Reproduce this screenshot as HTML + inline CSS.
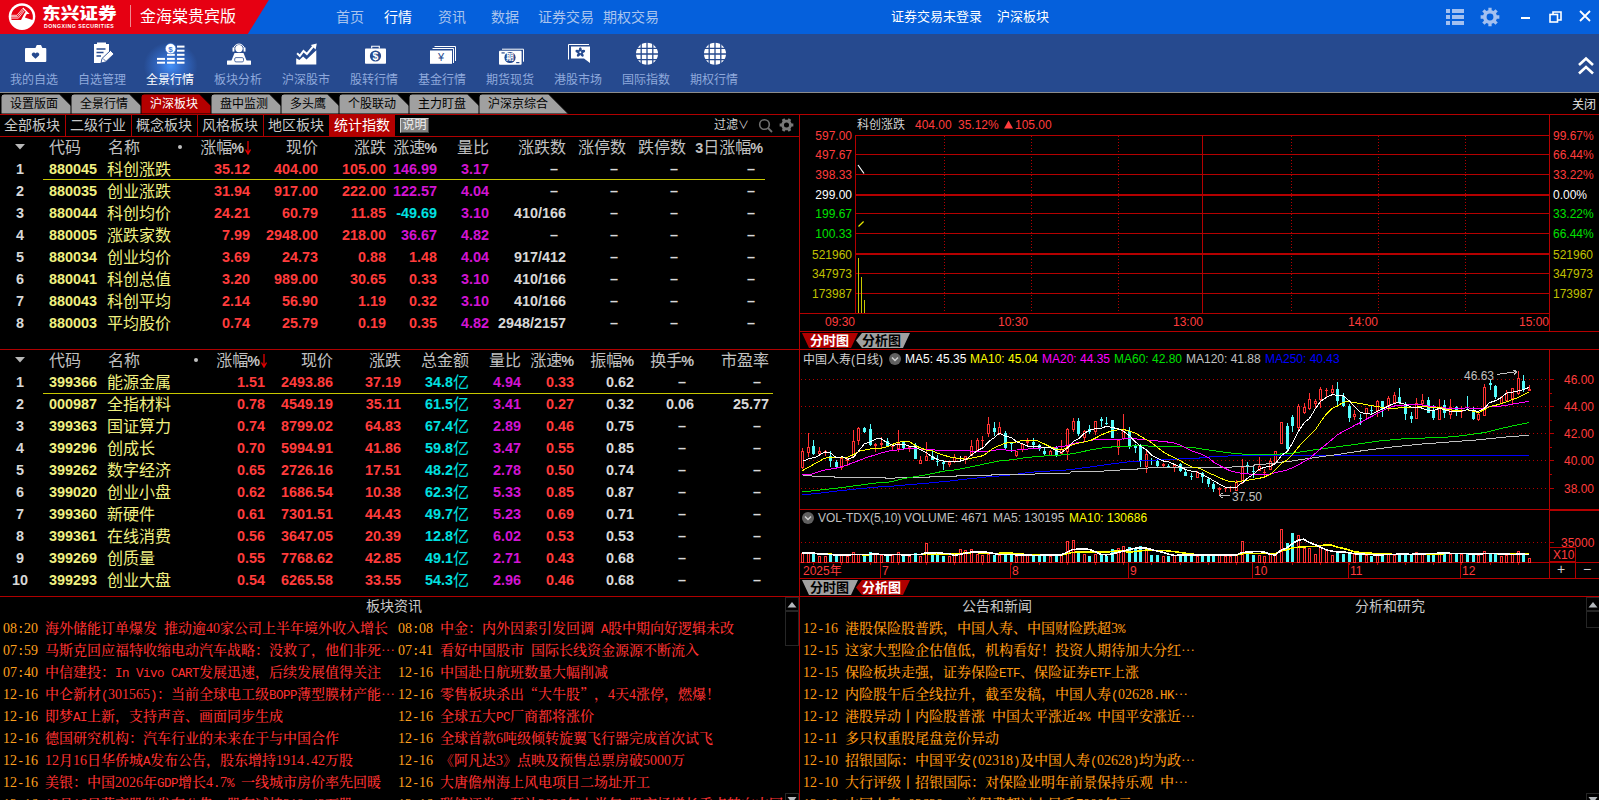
<!DOCTYPE html>
<html lang="zh-CN"><head><meta charset="utf-8"><title>东兴证券 金海棠贵宾版</title>
<style>
*{margin:0;padding:0;box-sizing:border-box}
html,body{width:1599px;height:800px;overflow:hidden;background:#000}
body{position:relative;font-family:"Liberation Sans","Noto Sans CJK SC",sans-serif;color:#c0c0c0}
.a{position:absolute;white-space:nowrap}
.ln{position:absolute;background:#b00000}
#title{left:0;top:0;width:1599px;height:34px;background:#0560dc}
#tool{left:0;top:34px;width:1599px;height:58px;background:#264a8f}
#toolline{left:0;top:92px;width:1599px;height:1px;background:#8c8c8c}
.nav{top:7px;font-size:14px;color:#a9c4ee;line-height:20px}
.tb{top:70px;font-size:14px;color:#8fa9dc;width:68px;text-align:center;line-height:18px}
.tab{top:96px;height:17px;line-height:17px;font-size:12px;color:#000;text-align:center}
.st{top:115px;height:21px;line-height:21px;font-size:16px;color:#c0c0c0;font-weight:400}
.th{font-size:16px;line-height:22px;height:22px;color:#c0c0c0;font-weight:400}
.td{font-size:14.4px;line-height:22px;height:22px;font-weight:bold;text-align:right}
.nm{font-size:16px;line-height:22px;height:22px;color:#f0f080;font-weight:400;font-family:"Liberation Sans","Noto Sans CJK SC",sans-serif}
.r{color:#ff3c3c}.m{color:#d214d2}.c{color:#00e0e0}.w{color:#d8d8d8}.y{color:#f0f080}
.nw{font-family:"Liberation Serif","Noto Serif CJK SC",serif;font-weight:500;font-size:14px;line-height:22px;height:22px}
.el{font-family:"Noto Serif CJK SC",serif;font-feature-settings:"fwid";line-height:0}
.lt{font-family:"Liberation Mono",monospace;font-size:12.5px;letter-spacing:-0.5px;line-height:0}
.ax{font-size:12px;line-height:14px;font-family:"Liberation Sans",sans-serif}
</style></head>
<body>

<!-- header -->
<div class="a" id="title"></div>
<svg class="a" style="left:0;top:0" width="280" height="34" viewBox="0 0 280 34"><polygon points="0,0 268.800,0 247.800,34 0,34" fill="#e60012"/><circle cx="22" cy="16.600" r="13.300" fill="#fff"/><path d="M11.600 20 A10.900 10.900 0 1 1 32.400 20 Z" fill="#e60012"/><path d="M10.600 15.300 H17 L22.600 8.700 M10.700 16.700 H17.700 L23.400 9.800 M11 18.100 H18.400 L24.200 10.900" stroke="#fff" stroke-width="0.800" fill="none"/><polygon points="23.200,7.500 29.600,14 26.800,14 24.800,17.600 32.400,20 21,20 24.400,13.600 25.700,11.800 22.400,8.500" fill="#fff"/><rect x="130" y="5" width="1" height="22" fill="#f08a90"/></svg>
<div class="a" style="left:42px;top:2.5px;font-size:16px;line-height:22px;font-weight:900;color:#fff;transform:scaleX(1.165);transform-origin:0 0;font-family:'Liberation Sans','Noto Sans CJK SC',sans-serif">东兴证券</div>
<div class="a" style="left:44px;top:22px;font-size:5.2px;line-height:8px;font-weight:bold;color:#fff;letter-spacing:0.5px">DONGXING SECURITIES</div>
<div class="a" style="left:140px;top:6px;font-size:16px;line-height:22px;color:#fff">金海棠贵宾版</div>
<div class="a nav" style="left:336px;color:#a9c4ee">首页</div>
<div class="a nav" style="left:384px;color:#fff">行情</div>
<div class="a nav" style="left:438px;color:#a9c4ee">资讯</div>
<div class="a nav" style="left:491px;color:#a9c4ee">数据</div>
<div class="a nav" style="left:538px;color:#a9c4ee">证券交易</div>
<div class="a nav" style="left:603px;color:#a9c4ee">期权交易</div>
<div class="a" style="left:891px;top:8px;font-size:13px;line-height:18px;color:#fff">证券交易未登录</div>
<div class="a" style="left:997px;top:8px;font-size:13px;line-height:18px;color:#fff">沪深板块</div>
<svg class="a" style="left:1440px;top:0" width="159" height="34" viewBox="1440 0 159 34"><g fill="#a3c0f0"><rect x="1446" y="9" width="4" height="4"/><rect x="1452" y="9" width="12" height="4"/><rect x="1446" y="15" width="4" height="4"/><rect x="1452" y="15" width="12" height="4"/><rect x="1446" y="21" width="4" height="4"/><rect x="1452" y="21" width="12" height="4"/></g><path d="M1499.36 15.37 L1499.36 18.63 L1496.81 18.63 L1495.97 20.66 L1497.77 22.46 L1495.46 24.77 L1493.66 22.97 L1491.63 23.81 L1491.63 26.36 L1488.37 26.36 L1488.37 23.81 L1486.34 22.97 L1484.54 24.77 L1482.23 22.46 L1484.03 20.66 L1483.19 18.63 L1480.64 18.63 L1480.64 15.37 L1483.19 15.37 L1484.03 13.34 L1482.23 11.54 L1484.54 9.23 L1486.34 11.03 L1488.37 10.19 L1488.37 7.64 L1491.63 7.64 L1491.63 10.19 L1493.66 11.03 L1495.46 9.23 L1497.77 11.54 L1495.97 13.34 L1496.81 15.37 Z M1486.58 17.00 a3.42 3.42 0 1 0 6.84 0 a3.42 3.42 0 1 0 -6.84 0 Z" fill="#a3c0f0" fill-rule="evenodd"/><rect x="1521" y="17" width="9" height="2" fill="#fff"/><g fill="none" stroke="#fff" stroke-width="1.6"><path d="M1553 14 V12 H1561 V20 H1558"/><rect x="1550" y="14.5" width="7.5" height="7.5"/></g><path d="M1580 11 L1590 21 M1590 11 L1580 21" stroke="#fff" stroke-width="1.8" fill="none"/></svg>
<div class="a" id="tool"></div>
<div class="a" style="left:132px;top:34px;width:76px;height:58px;background:radial-gradient(ellipse 27px 24px at 51% 55%,rgba(70,150,255,.95) 0%,rgba(60,130,240,.6) 40%,rgba(38,74,143,0) 100%)"></div>
<div class="a" style="left:0px;top:71px;width:68px;text-align:center;font-size:12px;line-height:18px;color:#8fa9dc">我的自选</div>
<div class="a" style="left:68px;top:71px;width:68px;text-align:center;font-size:12px;line-height:18px;color:#8fa9dc">自选管理</div>
<div class="a" style="left:136px;top:71px;width:68px;text-align:center;font-size:12px;line-height:18px;color:#fff">全景行情</div>
<div class="a" style="left:204px;top:71px;width:68px;text-align:center;font-size:12px;line-height:18px;color:#8fa9dc">板块分析</div>
<div class="a" style="left:272px;top:71px;width:68px;text-align:center;font-size:12px;line-height:18px;color:#8fa9dc">沪深股市</div>
<div class="a" style="left:340px;top:71px;width:68px;text-align:center;font-size:12px;line-height:18px;color:#8fa9dc">股转行情</div>
<div class="a" style="left:408px;top:71px;width:68px;text-align:center;font-size:12px;line-height:18px;color:#8fa9dc">基金行情</div>
<div class="a" style="left:476px;top:71px;width:68px;text-align:center;font-size:12px;line-height:18px;color:#8fa9dc">期货现货</div>
<div class="a" style="left:544px;top:71px;width:68px;text-align:center;font-size:12px;line-height:18px;color:#8fa9dc">港股市场</div>
<div class="a" style="left:612px;top:71px;width:68px;text-align:center;font-size:12px;line-height:18px;color:#8fa9dc">国际指数</div>
<div class="a" style="left:680px;top:71px;width:68px;text-align:center;font-size:12px;line-height:18px;color:#8fa9dc">期权行情</div>
<svg class="a" style="left:0;top:34px" width="760" height="58" viewBox="0 34 760 58"><g fill="#fff"><rect x="25" y="48" width="21.300" height="14" rx="1"/><polygon points="35.300,48.200 36.800,45 41,45 42.500,48.200"/></g><path d="M35.500 58.800 l-3.500 -3.300 a2 2 0 0 1 3.500 -2 a2 2 0 0 1 3.500 2 z" fill="#264a8f"/><g><path d="M94 44 h3 v-1.5 h9 v1.5 h3 v8 l-8 11 h-7z" fill="#fff"/><path d="M96.5 49 h9 M96.5 52.5 h7 M96.5 56 h4.5" stroke="#264a8f" stroke-width="1.3"/><path d="M101 63 l1 -4.5 l8.5 -8 l3.5 3.5 l-8.5 8z" fill="#fff" stroke="#264a8f" stroke-width="0.9"/><path d="M103 58.5 l3 3" stroke="#264a8f" stroke-width="0.8"/></g><g fill="#fff"><rect x="177" y="45.6" width="7.5" height="2"/><rect x="177" y="49.7" width="7.5" height="2"/><rect x="177" y="53.8" width="7.5" height="2"/><rect x="177" y="57.9" width="7.5" height="2"/><rect x="177" y="61.7" width="7.5" height="2"/><rect x="167" y="53.8" width="7.8" height="2"/><rect x="167" y="57.9" width="7.8" height="2"/><rect x="167" y="61.7" width="7.8" height="2"/><rect x="157" y="57.9" width="8" height="2"/><rect x="157" y="61.7" width="8" height="2"/><circle cx="170.600" cy="48.600" r="5.200" stroke="#3a78d8" stroke-width="0.600"/></g><text x="170.600" y="51.500" font-size="8" font-weight="bold" text-anchor="middle" fill="#3a78d8" font-family="Liberation Sans,sans-serif">$</text><g fill="#fff"><circle cx="239" cy="48.600" r="3.700"/><rect x="232.500" y="47.600" width="1.900" height="4"/><rect x="243.600" y="47.600" width="1.900" height="4"/><path d="M234.500 53 h9 l3.200 8 h-15.400 z"/><rect x="227" y="60.500" width="24" height="4.300" rx="0.500"/></g><path d="M233.500 49.500 a5.500 5.500 0 0 1 11 0" stroke="#fff" stroke-width="1" fill="none"/><rect x="234.700" y="57.600" width="8.800" height="4.300" rx="1.300" fill="none" stroke="#264a8f" stroke-width="0.800"/><polygon points="296.200,58.300 299.400,60.100 303.100,56.600 306.500,59.600 316.300,50.300 316.300,64.500 296.200,64.500" fill="#fff"/><path d="M297.100 53.300 L299.800 55.900 L303.500 50.900 L306.900 54 L313.600 45.800" stroke="#fff" stroke-width="2" fill="none"/><polygon points="316.800,43.600 310.800,45 315.600,49.600" fill="#fff"/><g><path d="M371.700 48.500 v-2.300 h7.600 v2.300" stroke="#fff" stroke-width="1.100" fill="none"/><rect x="365" y="48.500" width="21" height="15.300" rx="0.800" fill="#fff"/><circle cx="375.500" cy="56" r="5.600" fill="#264a8f"/></g><text x="375.500" y="59.800" font-size="10.500" font-weight="bold" text-anchor="middle" fill="#fff" font-family="Liberation Sans,sans-serif">$</text><g fill="none" stroke="#fff" stroke-width="1"><path d="M434.500 46.500 h21 v14.500"/><path d="M432.500 48.500 h21 v14.500"/></g><rect x="430" y="50.500" width="22" height="13.300" fill="#fff"/><text x="441" y="61.300" font-size="11" text-anchor="middle" fill="#264a8f" font-family="Liberation Sans,sans-serif">¥</text><path d="M502 49.200 h21.500 v12.500" stroke="#fff" stroke-width="1" fill="none"/><rect x="499" y="50.800" width="22.600" height="14" rx="1" fill="#fff"/><circle cx="510" cy="57.500" r="5.600" fill="#264a8f"/><rect x="501.500" y="52.300" width="3.200" height="1.200" fill="#264a8f"/><rect x="516.200" y="62" width="3.200" height="1.200" fill="#264a8f"/><text x="510" y="60.400" font-size="7.800" font-weight="bold" text-anchor="middle" fill="#fff" font-family="Liberation Sans,Noto Sans CJK SC,sans-serif">期</text><path d="M568.500 59.500 V44.500 H589" stroke="#fff" stroke-width="1" fill="none"/><path d="M571 46.500 h19 v16.500 l-6 -4.500 h-13 z" fill="#fff"/><g fill="#264a8f" transform="translate(580.300 52.300)"><ellipse cx="0" cy="-2.500" rx="1.500" ry="2.600" transform="rotate(0)"/><ellipse cx="0" cy="-2.500" rx="1.500" ry="2.600" transform="rotate(72)"/><ellipse cx="0" cy="-2.500" rx="1.500" ry="2.600" transform="rotate(144)"/><ellipse cx="0" cy="-2.500" rx="1.500" ry="2.600" transform="rotate(216)"/><ellipse cx="0" cy="-2.500" rx="1.500" ry="2.600" transform="rotate(288)"/></g><circle cx="580.300" cy="52.300" r="1" fill="#fff"/><circle cx="647.0" cy="53.800" r="11" fill="#fff"/><g stroke="#264a8f" stroke-width="1.300" fill="none"><path d="M641.2 42 v24 M647.0 42 v24 M652.8 42 v24"/><path d="M635.0 48.300 h24 M635.0 54 h24 M635.0 59.700 h24"/></g><circle cx="715.0" cy="53.800" r="11" fill="#fff"/><g stroke="#264a8f" stroke-width="1.300" fill="none"><path d="M709.2 42 v24 M715.0 42 v24 M720.8 42 v24"/><path d="M703.0 48.300 h24 M703.0 54 h24 M703.0 59.700 h24"/></g></svg>
<svg class="a" style="left:1574px;top:54px" width="24" height="24" viewBox="0 0 24 24"><path d="M5 11 L12 4.5 L19 11 M5 19.5 L12 13 L19 19.5" stroke="#fff" stroke-width="2.6" fill="none"/></svg>
<div class="a" id="toolline"></div>
<!-- tabs -->
<svg class="a" style="left:0;top:93px" width="600" height="22" viewBox="0 93 600 22"><path d="M1 114 V97 Q1 94 4 94 H59.5 L79.5 114 Z" fill="#a0a0a0" stroke="#000" stroke-width="1"/><path d="M71 114 V97 Q71 94 74 94 H129.5 L149.5 114 Z" fill="#a0a0a0" stroke="#000" stroke-width="1"/><path d="M141 114 V97 Q141 94 144 94 H199.5 L219.5 114 Z" fill="#b40000" stroke="#000" stroke-width="1"/><path d="M211 114 V97 Q211 94 214 94 H269.5 L289.5 114 Z" fill="#a0a0a0" stroke="#000" stroke-width="1"/><path d="M281 114 V97 Q281 94 284 94 H327.5 L347.5 114 Z" fill="#a0a0a0" stroke="#000" stroke-width="1"/><path d="M339 114 V97 Q339 94 342 94 H397.5 L417.5 114 Z" fill="#a0a0a0" stroke="#000" stroke-width="1"/><path d="M409 114 V97 Q409 94 412 94 H467.5 L487.5 114 Z" fill="#a0a0a0" stroke="#000" stroke-width="1"/><path d="M479 114 V97 Q479 94 482 94 H548.5 L568.5 114 Z" fill="#a0a0a0" stroke="#000" stroke-width="1"/></svg>
<div class="a tab" style="left:10px;color:#000">设置版面</div>
<div class="a tab" style="left:80px;color:#000">全景行情</div>
<div class="a tab" style="left:150px;color:#fff">沪深板块</div>
<div class="a tab" style="left:220px;color:#000">盘中监测</div>
<div class="a tab" style="left:290px;color:#000">多头鹰</div>
<div class="a tab" style="left:348px;color:#000">个股联动</div>
<div class="a tab" style="left:418px;color:#000">主力盯盘</div>
<div class="a tab" style="left:488px;color:#000">沪深京综合</div>
<div class="a" style="left:1572px;top:97px;font-size:12px;line-height:17px;color:#e0e0e0">关闭</div>
<div class="ln" style="left:0;top:114px;width:799px;height:1px"></div>
<div class="ln" style="left:0;top:136px;width:799px;height:1px"></div>
<div class="a st" style="left:-1px;width:66px;text-align:center;font-size:14px;color:#c8c8c8">全部板块</div>
<div class="ln" style="left:65px;top:115px;width:1px;height:21px"></div>
<div class="a st" style="left:65px;width:66px;text-align:center;font-size:14px;color:#c8c8c8">二级行业</div>
<div class="ln" style="left:131px;top:115px;width:1px;height:21px"></div>
<div class="a st" style="left:131px;width:66px;text-align:center;font-size:14px;color:#c8c8c8">概念板块</div>
<div class="ln" style="left:197px;top:115px;width:1px;height:21px"></div>
<div class="a st" style="left:197px;width:66px;text-align:center;font-size:14px;color:#c8c8c8">风格板块</div>
<div class="ln" style="left:263px;top:115px;width:1px;height:21px"></div>
<div class="a st" style="left:263px;width:66px;text-align:center;font-size:14px;color:#c8c8c8">地区板块</div>
<div class="ln" style="left:329px;top:115px;width:1px;height:21px"></div>
<div class="a" style="left:329px;top:115px;width:66px;height:21px;background:#b40000"></div>
<div class="a st" style="left:329px;width:66px;text-align:center;font-size:14px;color:#fff">统计指数</div>
<div class="a" style="left:400px;top:118px;width:29px;height:15px;background:#808080;border:1px solid #d0d0d0;border-right-color:#404040;border-bottom-color:#404040;font-size:12px;line-height:13px;text-align:center;color:#f0f0f0">说明</div>
<div class="a" style="left:714px;top:116px;font-size:12px;line-height:19px;color:#d0d0d0">过滤<span style="font-size:11px">∨</span></div>
<svg class="a" style="left:755px;top:115px" width="42" height="21" viewBox="755 115 42 21"><circle cx="764.5" cy="124.500" r="4.800" stroke="#707070" stroke-width="1.600" fill="none"/><path d="M768 128 l4 4" stroke="#707070" stroke-width="1.800"/><path d="M793.35 123.54 L793.35 126.46 L791.67 126.56 L790.44 128.70 L791.18 130.20 L788.66 131.66 L787.73 130.26 L785.27 130.26 L784.34 131.66 L781.82 130.20 L782.56 128.70 L781.33 126.56 L779.65 126.46 L779.65 123.54 L781.33 123.44 L782.56 121.30 L781.82 119.80 L784.34 118.34 L785.27 119.74 L787.73 119.74 L788.66 118.34 L791.18 119.80 L790.44 121.30 L791.67 123.44 Z M783.98 125.00 a2.52 2.52 0 1 0 5.04 0 a2.52 2.52 0 1 0 -5.04 0 Z" fill="#787878" fill-rule="evenodd"/></svg>
<!-- tables -->
<svg class="a" style="left:15px;top:144px" width="10" height="6" viewBox="0 0 10 6"><path d="M0 0 H10 L5 5.5 Z" fill="#b8b8b8"/></svg>
<div class="a th" style="left:49px;top:137px">代码</div>
<div class="a th" style="left:108px;top:137px">名称</div>
<div class="a" style="left:178px;top:145px;width:4px;height:4px;border-radius:2px;background:#c0c0c0"></div>
<div class="a th" style="right:1355px;top:137px">涨幅<b style="margin-left:-1px;font-size:14.4px;font-family:'Liberation Sans',sans-serif">%</b></div>
<div class="a th" style="right:1281px;top:137px">现价</div>
<div class="a th" style="right:1213px;top:137px">涨跌</div>
<div class="a th" style="right:1162px;top:137px">涨速<b style="margin-left:-1px;font-size:14.4px;font-family:'Liberation Sans',sans-serif">%</b></div>
<div class="a th" style="right:1110px;top:137px">量比</div>
<div class="a th" style="right:1033px;top:137px">涨跌数</div>
<div class="a th" style="right:973px;top:137px">涨停数</div>
<div class="a th" style="right:913px;top:137px">跌停数</div>
<div class="a th" style="right:836px;top:137px"><b style="font-size:14.4px;font-family:'Liberation Sans',sans-serif">3</b>日涨幅<b style="margin-left:-1px;font-size:14.4px;font-family:'Liberation Sans',sans-serif">%</b></div>
<svg class="a" style="left:245px;top:141px" width="6" height="14" viewBox="0 0 6 14"><path d="M3 0 V12 M0.500 8.500 L3 13 L5.500 8.500" stroke="#e00000" stroke-width="1.300" fill="none"/></svg>
<div class="a td w" style="left:10px;width:20px;text-align:center;top:158px">1</div>
<div class="a td y" style="left:49px;top:158px">880045</div>
<div class="a nm" style="left:107px;top:159px">科创涨跌</div>
<div class="a td r" style="right:1349px;top:158px">35.12</div>
<div class="a td r" style="right:1281px;top:158px">404.00</div>
<div class="a td r" style="right:1213px;top:158px">105.00</div>
<div class="a td m" style="right:1162px;top:158px">146.99</div>
<div class="a td m" style="right:1110px;top:158px">3.17</div>
<div class="a td w" style="right:1041px;top:158px">–</div>
<div class="a td w" style="right:981px;top:158px">–</div>
<div class="a td w" style="right:921px;top:158px">–</div>
<div class="a td w" style="right:844px;top:158px">–</div>
<div class="a td w" style="left:10px;width:20px;text-align:center;top:180px">2</div>
<div class="a td y" style="left:49px;top:180px">880035</div>
<div class="a nm" style="left:107px;top:181px">创业涨跌</div>
<div class="a td r" style="right:1349px;top:180px">31.94</div>
<div class="a td r" style="right:1281px;top:180px">917.00</div>
<div class="a td r" style="right:1213px;top:180px">222.00</div>
<div class="a td m" style="right:1162px;top:180px">122.57</div>
<div class="a td m" style="right:1110px;top:180px">4.04</div>
<div class="a td w" style="right:1041px;top:180px">–</div>
<div class="a td w" style="right:981px;top:180px">–</div>
<div class="a td w" style="right:921px;top:180px">–</div>
<div class="a td w" style="right:844px;top:180px">–</div>
<div class="a td w" style="left:10px;width:20px;text-align:center;top:202px">3</div>
<div class="a td y" style="left:49px;top:202px">880044</div>
<div class="a nm" style="left:107px;top:203px">科创均价</div>
<div class="a td r" style="right:1349px;top:202px">24.21</div>
<div class="a td r" style="right:1281px;top:202px">60.79</div>
<div class="a td r" style="right:1213px;top:202px">11.85</div>
<div class="a td c" style="right:1162px;top:202px">-49.69</div>
<div class="a td m" style="right:1110px;top:202px">3.10</div>
<div class="a td w" style="right:1033px;top:202px">410/166</div>
<div class="a td w" style="right:981px;top:202px">–</div>
<div class="a td w" style="right:921px;top:202px">–</div>
<div class="a td w" style="right:844px;top:202px">–</div>
<div class="a td w" style="left:10px;width:20px;text-align:center;top:224px">4</div>
<div class="a td y" style="left:49px;top:224px">880005</div>
<div class="a nm" style="left:107px;top:225px">涨跌家数</div>
<div class="a td r" style="right:1349px;top:224px">7.99</div>
<div class="a td r" style="right:1281px;top:224px">2948.00</div>
<div class="a td r" style="right:1213px;top:224px">218.00</div>
<div class="a td m" style="right:1162px;top:224px">36.67</div>
<div class="a td m" style="right:1110px;top:224px">4.82</div>
<div class="a td w" style="right:1041px;top:224px">–</div>
<div class="a td w" style="right:981px;top:224px">–</div>
<div class="a td w" style="right:921px;top:224px">–</div>
<div class="a td w" style="right:844px;top:224px">–</div>
<div class="a td w" style="left:10px;width:20px;text-align:center;top:246px">5</div>
<div class="a td y" style="left:49px;top:246px">880034</div>
<div class="a nm" style="left:107px;top:247px">创业均价</div>
<div class="a td r" style="right:1349px;top:246px">3.69</div>
<div class="a td r" style="right:1281px;top:246px">24.73</div>
<div class="a td r" style="right:1213px;top:246px">0.88</div>
<div class="a td r" style="right:1162px;top:246px">1.48</div>
<div class="a td m" style="right:1110px;top:246px">4.04</div>
<div class="a td w" style="right:1033px;top:246px">917/412</div>
<div class="a td w" style="right:981px;top:246px">–</div>
<div class="a td w" style="right:921px;top:246px">–</div>
<div class="a td w" style="right:844px;top:246px">–</div>
<div class="a td w" style="left:10px;width:20px;text-align:center;top:268px">6</div>
<div class="a td y" style="left:49px;top:268px">880041</div>
<div class="a nm" style="left:107px;top:269px">科创总值</div>
<div class="a td r" style="right:1349px;top:268px">3.20</div>
<div class="a td r" style="right:1281px;top:268px">989.00</div>
<div class="a td r" style="right:1213px;top:268px">30.65</div>
<div class="a td r" style="right:1162px;top:268px">0.33</div>
<div class="a td m" style="right:1110px;top:268px">3.10</div>
<div class="a td w" style="right:1033px;top:268px">410/166</div>
<div class="a td w" style="right:981px;top:268px">–</div>
<div class="a td w" style="right:921px;top:268px">–</div>
<div class="a td w" style="right:844px;top:268px">–</div>
<div class="a td w" style="left:10px;width:20px;text-align:center;top:290px">7</div>
<div class="a td y" style="left:49px;top:290px">880043</div>
<div class="a nm" style="left:107px;top:291px">科创平均</div>
<div class="a td r" style="right:1349px;top:290px">2.14</div>
<div class="a td r" style="right:1281px;top:290px">56.90</div>
<div class="a td r" style="right:1213px;top:290px">1.19</div>
<div class="a td r" style="right:1162px;top:290px">0.32</div>
<div class="a td m" style="right:1110px;top:290px">3.10</div>
<div class="a td w" style="right:1033px;top:290px">410/166</div>
<div class="a td w" style="right:981px;top:290px">–</div>
<div class="a td w" style="right:921px;top:290px">–</div>
<div class="a td w" style="right:844px;top:290px">–</div>
<div class="a td w" style="left:10px;width:20px;text-align:center;top:312px">8</div>
<div class="a td y" style="left:49px;top:312px">880003</div>
<div class="a nm" style="left:107px;top:313px">平均股价</div>
<div class="a td r" style="right:1349px;top:312px">0.74</div>
<div class="a td r" style="right:1281px;top:312px">25.79</div>
<div class="a td r" style="right:1213px;top:312px">0.19</div>
<div class="a td r" style="right:1162px;top:312px">0.35</div>
<div class="a td m" style="right:1110px;top:312px">4.82</div>
<div class="a td w" style="right:1033px;top:312px">2948/2157</div>
<div class="a td w" style="right:981px;top:312px">–</div>
<div class="a td w" style="right:921px;top:312px">–</div>
<div class="a td w" style="right:844px;top:312px">–</div>
<div class="a" style="left:43px;top:179px;width:722px;height:1px;background:#c8c800"></div>
<div class="ln" style="left:0;top:349px;width:799px;height:1px"></div>
<svg class="a" style="left:15px;top:357px" width="10" height="6" viewBox="0 0 10 6"><path d="M0 0 H10 L5 5.5 Z" fill="#b8b8b8"/></svg>
<div class="a th" style="left:49px;top:350px">代码</div>
<div class="a th" style="left:108px;top:350px">名称</div>
<div class="a" style="left:194px;top:358px;width:4px;height:4px;border-radius:2px;background:#c0c0c0"></div>
<div class="a th" style="right:1339px;top:350px">涨幅<b style="margin-left:-1px;font-size:14.4px;font-family:'Liberation Sans',sans-serif">%</b></div>
<div class="a th" style="right:1266px;top:350px">现价</div>
<div class="a th" style="right:1198px;top:350px">涨跌</div>
<div class="a th" style="right:1130px;top:350px">总金额</div>
<div class="a th" style="right:1078px;top:350px">量比</div>
<div class="a th" style="right:1025px;top:350px">涨速<b style="margin-left:-1px;font-size:14.4px;font-family:'Liberation Sans',sans-serif">%</b></div>
<div class="a th" style="right:965px;top:350px">振幅<b style="margin-left:-1px;font-size:14.4px;font-family:'Liberation Sans',sans-serif">%</b></div>
<div class="a th" style="right:905px;top:350px">换手<b style="margin-left:-1px;font-size:14.4px;font-family:'Liberation Sans',sans-serif">%</b></div>
<div class="a th" style="right:830px;top:350px">市盈率</div>
<svg class="a" style="left:261px;top:354px" width="6" height="14" viewBox="0 0 6 14"><path d="M3 0 V12 M0.500 8.500 L3 13 L5.500 8.500" stroke="#e00000" stroke-width="1.300" fill="none"/></svg>
<div class="a td w" style="left:10px;width:20px;text-align:center;top:371px">1</div>
<div class="a td y" style="left:49px;top:371px">399366</div>
<div class="a nm" style="left:107px;top:372px">能源金属</div>
<div class="a td r" style="right:1334px;top:371px">1.51</div>
<div class="a td r" style="right:1266px;top:371px">2493.86</div>
<div class="a td r" style="right:1198px;top:371px">37.19</div>
<div class="a td c" style="right:1146px;top:371px">34.8</div>
<div class="a nm" style="left:453px;top:372px;color:#00e0e0">亿</div>
<div class="a td m" style="right:1078px;top:371px">4.94</div>
<div class="a td r" style="right:1025px;top:371px">0.33</div>
<div class="a td w" style="right:965px;top:371px">0.62</div>
<div class="a td w" style="right:913px;top:371px">–</div>
<div class="a td w" style="right:838px;top:371px">–</div>
<div class="a td w" style="left:10px;width:20px;text-align:center;top:393px">2</div>
<div class="a td y" style="left:49px;top:393px">000987</div>
<div class="a nm" style="left:107px;top:394px">全指材料</div>
<div class="a td r" style="right:1334px;top:393px">0.78</div>
<div class="a td r" style="right:1266px;top:393px">4549.19</div>
<div class="a td r" style="right:1198px;top:393px">35.11</div>
<div class="a td c" style="right:1146px;top:393px">61.5</div>
<div class="a nm" style="left:453px;top:394px;color:#00e0e0">亿</div>
<div class="a td m" style="right:1078px;top:393px">3.41</div>
<div class="a td r" style="right:1025px;top:393px">0.27</div>
<div class="a td w" style="right:965px;top:393px">0.32</div>
<div class="a td w" style="right:905px;top:393px">0.06</div>
<div class="a td w" style="right:830px;top:393px">25.77</div>
<div class="a td w" style="left:10px;width:20px;text-align:center;top:415px">3</div>
<div class="a td y" style="left:49px;top:415px">399363</div>
<div class="a nm" style="left:107px;top:416px">国证算力</div>
<div class="a td r" style="right:1334px;top:415px">0.74</div>
<div class="a td r" style="right:1266px;top:415px">8799.02</div>
<div class="a td r" style="right:1198px;top:415px">64.83</div>
<div class="a td c" style="right:1146px;top:415px">67.4</div>
<div class="a nm" style="left:453px;top:416px;color:#00e0e0">亿</div>
<div class="a td m" style="right:1078px;top:415px">2.89</div>
<div class="a td r" style="right:1025px;top:415px">0.46</div>
<div class="a td w" style="right:965px;top:415px">0.75</div>
<div class="a td w" style="right:913px;top:415px">–</div>
<div class="a td w" style="right:838px;top:415px">–</div>
<div class="a td w" style="left:10px;width:20px;text-align:center;top:437px">4</div>
<div class="a td y" style="left:49px;top:437px">399296</div>
<div class="a nm" style="left:107px;top:438px">创成长</div>
<div class="a td r" style="right:1334px;top:437px">0.70</div>
<div class="a td r" style="right:1266px;top:437px">5994.91</div>
<div class="a td r" style="right:1198px;top:437px">41.86</div>
<div class="a td c" style="right:1146px;top:437px">59.8</div>
<div class="a nm" style="left:453px;top:438px;color:#00e0e0">亿</div>
<div class="a td m" style="right:1078px;top:437px">3.47</div>
<div class="a td r" style="right:1025px;top:437px">0.55</div>
<div class="a td w" style="right:965px;top:437px">0.85</div>
<div class="a td w" style="right:913px;top:437px">–</div>
<div class="a td w" style="right:838px;top:437px">–</div>
<div class="a td w" style="left:10px;width:20px;text-align:center;top:459px">5</div>
<div class="a td y" style="left:49px;top:459px">399262</div>
<div class="a nm" style="left:107px;top:460px">数字经济</div>
<div class="a td r" style="right:1334px;top:459px">0.65</div>
<div class="a td r" style="right:1266px;top:459px">2726.16</div>
<div class="a td r" style="right:1198px;top:459px">17.51</div>
<div class="a td c" style="right:1146px;top:459px">48.2</div>
<div class="a nm" style="left:453px;top:460px;color:#00e0e0">亿</div>
<div class="a td m" style="right:1078px;top:459px">2.78</div>
<div class="a td r" style="right:1025px;top:459px">0.50</div>
<div class="a td w" style="right:965px;top:459px">0.74</div>
<div class="a td w" style="right:913px;top:459px">–</div>
<div class="a td w" style="right:838px;top:459px">–</div>
<div class="a td w" style="left:10px;width:20px;text-align:center;top:481px">6</div>
<div class="a td y" style="left:49px;top:481px">399020</div>
<div class="a nm" style="left:107px;top:482px">创业小盘</div>
<div class="a td r" style="right:1334px;top:481px">0.62</div>
<div class="a td r" style="right:1266px;top:481px">1686.54</div>
<div class="a td r" style="right:1198px;top:481px">10.38</div>
<div class="a td c" style="right:1146px;top:481px">62.3</div>
<div class="a nm" style="left:453px;top:482px;color:#00e0e0">亿</div>
<div class="a td m" style="right:1078px;top:481px">5.33</div>
<div class="a td r" style="right:1025px;top:481px">0.85</div>
<div class="a td w" style="right:965px;top:481px">0.87</div>
<div class="a td w" style="right:913px;top:481px">–</div>
<div class="a td w" style="right:838px;top:481px">–</div>
<div class="a td w" style="left:10px;width:20px;text-align:center;top:503px">7</div>
<div class="a td y" style="left:49px;top:503px">399360</div>
<div class="a nm" style="left:107px;top:504px">新硬件</div>
<div class="a td r" style="right:1334px;top:503px">0.61</div>
<div class="a td r" style="right:1266px;top:503px">7301.51</div>
<div class="a td r" style="right:1198px;top:503px">44.43</div>
<div class="a td c" style="right:1146px;top:503px">49.7</div>
<div class="a nm" style="left:453px;top:504px;color:#00e0e0">亿</div>
<div class="a td m" style="right:1078px;top:503px">5.23</div>
<div class="a td r" style="right:1025px;top:503px">0.69</div>
<div class="a td w" style="right:965px;top:503px">0.71</div>
<div class="a td w" style="right:913px;top:503px">–</div>
<div class="a td w" style="right:838px;top:503px">–</div>
<div class="a td w" style="left:10px;width:20px;text-align:center;top:525px">8</div>
<div class="a td y" style="left:49px;top:525px">399361</div>
<div class="a nm" style="left:107px;top:526px">在线消费</div>
<div class="a td r" style="right:1334px;top:525px">0.56</div>
<div class="a td r" style="right:1266px;top:525px">3647.05</div>
<div class="a td r" style="right:1198px;top:525px">20.39</div>
<div class="a td c" style="right:1146px;top:525px">12.8</div>
<div class="a nm" style="left:453px;top:526px;color:#00e0e0">亿</div>
<div class="a td m" style="right:1078px;top:525px">6.02</div>
<div class="a td r" style="right:1025px;top:525px">0.53</div>
<div class="a td w" style="right:965px;top:525px">0.53</div>
<div class="a td w" style="right:913px;top:525px">–</div>
<div class="a td w" style="right:838px;top:525px">–</div>
<div class="a td w" style="left:10px;width:20px;text-align:center;top:547px">9</div>
<div class="a td y" style="left:49px;top:547px">399269</div>
<div class="a nm" style="left:107px;top:548px">创质量</div>
<div class="a td r" style="right:1334px;top:547px">0.55</div>
<div class="a td r" style="right:1266px;top:547px">7768.62</div>
<div class="a td r" style="right:1198px;top:547px">42.85</div>
<div class="a td c" style="right:1146px;top:547px">49.1</div>
<div class="a nm" style="left:453px;top:548px;color:#00e0e0">亿</div>
<div class="a td m" style="right:1078px;top:547px">2.71</div>
<div class="a td r" style="right:1025px;top:547px">0.43</div>
<div class="a td w" style="right:965px;top:547px">0.68</div>
<div class="a td w" style="right:913px;top:547px">–</div>
<div class="a td w" style="right:838px;top:547px">–</div>
<div class="a td w" style="left:10px;width:20px;text-align:center;top:569px">10</div>
<div class="a td y" style="left:49px;top:569px">399293</div>
<div class="a nm" style="left:107px;top:570px">创业大盘</div>
<div class="a td r" style="right:1334px;top:569px">0.54</div>
<div class="a td r" style="right:1266px;top:569px">6265.58</div>
<div class="a td r" style="right:1198px;top:569px">33.55</div>
<div class="a td c" style="right:1146px;top:569px">54.3</div>
<div class="a nm" style="left:453px;top:570px;color:#00e0e0">亿</div>
<div class="a td m" style="right:1078px;top:569px">2.96</div>
<div class="a td r" style="right:1025px;top:569px">0.46</div>
<div class="a td w" style="right:965px;top:569px">0.68</div>
<div class="a td w" style="right:913px;top:569px">–</div>
<div class="a td w" style="right:838px;top:569px">–</div>
<div class="a" style="left:43px;top:393px;width:730px;height:1px;background:#c8c800"></div>
<div class="ln" style="left:0;top:596px;width:799px;height:1px"></div>
<!-- news -->
<div class="a" style="left:366px;top:596px;font-size:14px;line-height:20px;color:#c8c8c8;font-weight:400">板块资讯</div>
<div class="a nw" style="left:3px;top:618px;color:#ffa01e">08<span class="lt">:</span>20</div>
<div class="a nw" style="left:45px;top:618px;color:#ff3232">海外储能订单爆发<span class="lt">&nbsp;</span>推动逾40家公司上半年境外收入增长</div>
<div class="a nw" style="left:3px;top:640px;color:#ffa01e">07<span class="lt">:</span>59</div>
<div class="a nw" style="left:45px;top:640px;color:#ff3232">马斯克回应福特收缩电动汽车战略：没救了，他们非死<span class="el">…</span></div>
<div class="a nw" style="left:3px;top:662px;color:#ffa01e">07<span class="lt">:</span>40</div>
<div class="a nw" style="left:45px;top:662px;color:#ff3232">中信建投：<span class="lt">In&nbsp;Vivo&nbsp;CART</span>发展迅速，后续发展值得关注</div>
<div class="a nw" style="left:3px;top:684px;color:#ffa01e">12<span class="lt">-</span>16</div>
<div class="a nw" style="left:45px;top:684px;color:#ff3232">中仑新材<span class="lt">(</span>301565<span class="lt">)</span>：当前全球电工级<span class="lt">BOPP</span>薄型膜材产能<span class="el">…</span></div>
<div class="a nw" style="left:3px;top:706px;color:#ffa01e">12<span class="lt">-</span>16</div>
<div class="a nw" style="left:45px;top:706px;color:#ff3232">即梦<span class="lt">AI</span>上新，支持声音、画面同步生成</div>
<div class="a nw" style="left:3px;top:728px;color:#ffa01e">12<span class="lt">-</span>16</div>
<div class="a nw" style="left:45px;top:728px;color:#ff3232">德国研究机构：汽车行业的未来在于与中国合作</div>
<div class="a nw" style="left:3px;top:750px;color:#ffa01e">12<span class="lt">-</span>16</div>
<div class="a nw" style="left:45px;top:750px;color:#ff3232">12月16日华侨城<span class="lt">A</span>发布公告，股东增持1914<span class="lt">.</span>42万股</div>
<div class="a nw" style="left:3px;top:772px;color:#ffa01e">12<span class="lt">-</span>16</div>
<div class="a nw" style="left:45px;top:772px;color:#ff3232">美银：中国2026年<span class="lt">GDP</span>增长4<span class="lt">.</span>7<span class="lt">%&nbsp;</span>一线城市房价率先回暖</div>
<div class="a nw" style="left:3px;top:794px;color:#ffa01e">12<span class="lt">-</span>16</div>
<div class="a nw" style="left:45px;top:794px;color:#ff3232">12月16日莫高股份发布公告，股东减持219<span class="lt">.</span>42万股</div>
<div class="a nw" style="left:398px;top:618px;color:#ffa01e">08<span class="lt">:</span>08</div>
<div class="a nw" style="left:440px;top:618px;color:#ff3232">中金：内外因素引发回调<span class="lt">&nbsp;A</span>股中期向好逻辑未改</div>
<div class="a nw" style="left:398px;top:640px;color:#ffa01e">07<span class="lt">:</span>41</div>
<div class="a nw" style="left:440px;top:640px;color:#ff3232">看好中国股市<span class="lt">&nbsp;</span>国际长线资金源源不断流入</div>
<div class="a nw" style="left:398px;top:662px;color:#ffa01e">12<span class="lt">-</span>16</div>
<div class="a nw" style="left:440px;top:662px;color:#ff3232">中国赴日航班数量大幅削减</div>
<div class="a nw" style="left:398px;top:684px;color:#ffa01e">12<span class="lt">-</span>16</div>
<div class="a nw" style="left:440px;top:684px;color:#ff3232">零售板块杀出<span class="el">“</span>大牛股<span class="el">”</span>，4天4涨停，燃爆！</div>
<div class="a nw" style="left:398px;top:706px;color:#ffa01e">12<span class="lt">-</span>16</div>
<div class="a nw" style="left:440px;top:706px;color:#ff3232">全球五大<span class="lt">PC</span>厂商都将涨价</div>
<div class="a nw" style="left:398px;top:728px;color:#ffa01e">12<span class="lt">-</span>16</div>
<div class="a nw" style="left:440px;top:728px;color:#ff3232">全球首款6吨级倾转旋翼飞行器完成首次试飞</div>
<div class="a nw" style="left:398px;top:750px;color:#ffa01e">12<span class="lt">-</span>16</div>
<div class="a nw" style="left:440px;top:750px;color:#ff3232">《阿凡达3》点映及预售总票房破5000万</div>
<div class="a nw" style="left:398px;top:772px;color:#ffa01e">12<span class="lt">-</span>16</div>
<div class="a nw" style="left:440px;top:772px;color:#ff3232">大唐儋州海上风电项目二场址开工</div>
<div class="a nw" style="left:398px;top:794px;color:#ffa01e">12<span class="lt">-</span>16</div>
<div class="a nw" style="left:440px;top:794px;color:#ff3232">联储证券：预计2026年上半年<span class="lt">A</span>股市场增长重点转向中国</div>
<svg class="a" style="left:785px;top:597px" width="14" height="203" viewBox="0 0 14 203"><rect x="0.5" y="0.5" width="13" height="13" fill="#000" stroke="#262626"/><path d="M2.5 10.500 L7.0 5 L11.5 10.500 Z" fill="#b4b8bc"/><rect x="0.5" y="14.500" width="13" height="34" fill="#000" stroke="#262626"/><rect x="0.5" y="196.5" width="13" height="13" fill="#000" stroke="#262626"/><path d="M2.5 200 L7.0 206 L11.5 200 Z" fill="#b4b8bc"/></svg>
<div class="ln" style="left:799px;top:114px;width:1px;height:686px"></div>
<div class="a" style="left:962px;top:596px;font-size:14px;line-height:20px;color:#c8c8c8;font-weight:400">公告和新闻</div>
<div class="a" style="left:1355px;top:596px;font-size:14px;line-height:20px;color:#c8c8c8;font-weight:400">分析和研究</div>
<div class="a nw" style="left:803px;top:618px;color:#ff9a14">12<span class="lt">-</span>16</div>
<div class="a nw" style="left:845px;top:618px;color:#ff9a14">港股保险股普跌，中国人寿、中国财险跌超3<span class="lt">%</span></div>
<div class="a nw" style="left:803px;top:640px;color:#ff9a14">12<span class="lt">-</span>15</div>
<div class="a nw" style="left:845px;top:640px;color:#ff9a14">这家大型险企估值低，机构看好！投资人期待加大分红<span class="el">…</span></div>
<div class="a nw" style="left:803px;top:662px;color:#ff9a14">12<span class="lt">-</span>15</div>
<div class="a nw" style="left:845px;top:662px;color:#ff9a14">保险板块走强，证券保险<span class="lt">ETF</span>、保险证券<span class="lt">ETF</span>上涨</div>
<div class="a nw" style="left:803px;top:684px;color:#ff9a14">12<span class="lt">-</span>12</div>
<div class="a nw" style="left:845px;top:684px;color:#ff9a14">内险股午后全线拉升，截至发稿，中国人寿<span class="lt">(</span>02628<span class="lt">.HK</span><span class="el">…</span></div>
<div class="a nw" style="left:803px;top:706px;color:#ff9a14">12<span class="lt">-</span>12</div>
<div class="a nw" style="left:845px;top:706px;color:#ff9a14">港股异动丨内险股普涨<span class="lt">&nbsp;</span>中国太平涨近4<span class="lt">%&nbsp;</span>中国平安涨近<span class="el">…</span></div>
<div class="a nw" style="left:803px;top:728px;color:#ff9a14">12<span class="lt">-</span>11</div>
<div class="a nw" style="left:845px;top:728px;color:#ff9a14">多只权重股尾盘竞价异动</div>
<div class="a nw" style="left:803px;top:750px;color:#ff9a14">12<span class="lt">-</span>10</div>
<div class="a nw" style="left:845px;top:750px;color:#ff9a14">招银国际：中国平安<span class="lt">(</span>02318<span class="lt">)</span>及中国人寿<span class="lt">(</span>02628<span class="lt">)</span>均为政<span class="el">…</span></div>
<div class="a nw" style="left:803px;top:772px;color:#ff9a14">12<span class="lt">-</span>10</div>
<div class="a nw" style="left:845px;top:772px;color:#ff9a14">大行评级丨招银国际：对保险业明年前景保持乐观<span class="lt">&nbsp;</span>中<span class="el">…</span></div>
<div class="a nw" style="left:803px;top:794px;color:#ff9a14">12<span class="lt">-</span>10</div>
<div class="a nw" style="left:845px;top:794px;color:#ff9a14">中国人寿<span class="lt">(</span>02628<span class="lt">)</span>：总保费超过人民币7000亿元</div>
<svg class="a" style="left:1586px;top:597px" width="14" height="203" viewBox="0 0 14 203"><rect x="0.5" y="0.5" width="13" height="13" fill="#000" stroke="#262626"/><path d="M2.5 10.500 L7.0 5 L11.5 10.500 Z" fill="#b4b8bc"/><rect x="0.5" y="14.500" width="13" height="16" fill="#000" stroke="#262626"/><rect x="0.5" y="196.5" width="13" height="13" fill="#000" stroke="#262626"/><path d="M2.5 200 L7.0 206 L11.5 200 Z" fill="#b4b8bc"/></svg>
<!-- chart1 -->
<svg class="a" style="left:799px;top:114px" width="800" height="236" viewBox="799 114 800 236" shape-rendering="crispEdges">
<rect x="799" y="114" width="800" height="1" fill="#b40000"/>
<rect x="799" y="114" width="1" height="236" fill="#b40000"/>
<rect x="1549" y="114" width="1" height="217" fill="#b40000"/>
<rect x="855" y="135" width="1" height="178" fill="#b40000"/>
<rect x="855" y="135" width="694" height="1" fill="#b40000"/>
<rect x="855" y="154" width="694" height="1" fill="#b40000"/>
<rect x="855" y="174" width="694" height="1" fill="#b40000"/>
<rect x="855" y="213" width="694" height="1" fill="#b40000"/>
<rect x="855" y="233" width="694" height="1" fill="#b40000"/>
<rect x="855" y="273" width="694" height="1" fill="#b40000"/>
<rect x="855" y="293" width="694" height="1" fill="#b40000"/>
<rect x="855" y="194" width="694" height="2" fill="#b40000"/>
<rect x="855" y="253" width="694" height="2" fill="#b40000"/>
<rect x="799" y="313" width="750" height="1" fill="#b40000"/>
<rect x="799" y="331" width="800" height="1" fill="#b40000"/>
<rect x="799" y="349" width="800" height="1" fill="#b40000"/>
<rect x="1202" y="135" width="1" height="178" fill="#b40000"/>
<line x1="944.5" y1="136" x2="944.5" y2="313" stroke="#b40000" stroke-width="1" stroke-dasharray="1 2"/>
<line x1="1031.5" y1="136" x2="1031.5" y2="313" stroke="#b40000" stroke-width="1" stroke-dasharray="1 2"/>
<line x1="1118.5" y1="136" x2="1118.5" y2="313" stroke="#b40000" stroke-width="1" stroke-dasharray="1 2"/>
<line x1="1291.5" y1="136" x2="1291.5" y2="313" stroke="#b40000" stroke-width="1" stroke-dasharray="1 2"/>
<line x1="1378.5" y1="136" x2="1378.5" y2="313" stroke="#b40000" stroke-width="1" stroke-dasharray="1 2"/>
<line x1="1465.5" y1="136" x2="1465.5" y2="313" stroke="#b40000" stroke-width="1" stroke-dasharray="1 2"/>
<rect x="858" y="258" width="1" height="55" fill="#c8c800"/>
<rect x="861" y="277" width="1" height="36" fill="#c8c800"/>
<rect x="864" y="300" width="1" height="13" fill="#c8c800"/>
</svg>
<svg class="a" style="left:855px;top:160px" width="14" height="70" viewBox="855 160 14 70"><path d="M858 165 L864 173.500" stroke="#fff" stroke-width="1.200" fill="none"/><path d="M858.500 226.500 L863.600 221.500" stroke="#e8e800" stroke-width="1.200" fill="none"/></svg>
<div class="a ax" style="right:747px;top:129px;color:#ff3c3c">597.00</div>
<div class="a ax" style="left:1553px;top:129px;color:#ff3c3c">99.67%</div>
<div class="a ax" style="right:747px;top:148px;color:#ff3c3c">497.67</div>
<div class="a ax" style="left:1553px;top:148px;color:#ff3c3c">66.44%</div>
<div class="a ax" style="right:747px;top:168px;color:#ff3c3c">398.33</div>
<div class="a ax" style="left:1553px;top:168px;color:#ff3c3c">33.22%</div>
<div class="a ax" style="right:747px;top:188px;color:#fff">299.00</div>
<div class="a ax" style="left:1553px;top:188px;color:#fff">0.00%</div>
<div class="a ax" style="right:747px;top:207px;color:#00e000">199.67</div>
<div class="a ax" style="left:1553px;top:207px;color:#00e000">33.22%</div>
<div class="a ax" style="right:747px;top:227px;color:#00e000">100.33</div>
<div class="a ax" style="left:1553px;top:227px;color:#00e000">66.44%</div>
<div class="a ax" style="right:747px;top:248px;color:#c0c000">521960</div>
<div class="a ax" style="left:1553px;top:248px;color:#c0c000">521960</div>
<div class="a ax" style="right:747px;top:267px;color:#c0c000">347973</div>
<div class="a ax" style="left:1553px;top:267px;color:#c0c000">347973</div>
<div class="a ax" style="right:747px;top:287px;color:#c0c000">173987</div>
<div class="a ax" style="left:1553px;top:287px;color:#c0c000">173987</div>
<div class="a ax" style="right:744px;top:315px;color:#ff3c3c">09:30</div>
<div class="a ax" style="right:571px;top:315px;color:#ff3c3c">10:30</div>
<div class="a ax" style="right:396px;top:315px;color:#ff3c3c">13:00</div>
<div class="a ax" style="right:221px;top:315px;color:#ff3c3c">14:00</div>
<div class="a ax" style="right:50px;top:315px;color:#ff3c3c">15:00</div>
<div class="a" style="left:857px;top:117px;font-size:12px;line-height:16px;color:#d0d0d0;font-weight:400">科创涨跌</div>
<div class="a ax" style="left:915px;top:118px;color:#ff3c3c">404.00</div>
<div class="a ax" style="left:958px;top:118px;color:#ff3c3c">35.12%</div>
<svg class="a" style="left:1004px;top:120px" width="10" height="10" viewBox="0 0 10 10"><path d="M0 8.500 L4.500 0.500 L9 8.500 Z" fill="#ff3c3c"/></svg>
<div class="a ax" style="left:1015px;top:118px;color:#ff3c3c">105.00</div>
<svg class="a" style="left:800px;top:333px" width="120" height="16" viewBox="0 0 120 16"><polygon points="2,0 58,0 51,15 9,15" fill="#b00000"/><polygon points="62,0 110,0 103,15 62,15 56,7.500" fill="#a0a0a0"/></svg><div class="a" style="left:810px;top:333px;font-size:13px;line-height:15px;font-weight:bold;color:#fff">分时图</div><div class="a" style="left:862px;top:333px;font-size:13px;line-height:15px;font-weight:bold;color:#000">分析图</div>
<svg class="a" style="left:800px;top:580px" width="120" height="16" viewBox="0 0 120 16"><polygon points="2,0 58,0 51,15 9,15" fill="#a0a0a0"/><polygon points="62,0 110,0 103,15 62,15 56,7.500" fill="#b00000"/></svg><div class="a" style="left:810px;top:580px;font-size:13px;line-height:15px;font-weight:bold;color:#000">分时图</div><div class="a" style="left:862px;top:580px;font-size:13px;line-height:15px;font-weight:bold;color:#fff">分析图</div>
<!-- chart2 -->
<svg class="a" style="left:799px;top:349px" width="800" height="250" viewBox="799 349 800 250" shape-rendering="crispEdges">
<rect x="1549" y="349" width="1" height="229" fill="#b40000"/>
<rect x="799" y="509" width="800" height="1" fill="#b40000"/>
<rect x="1549" y="510" width="50" height="1" fill="#b40000"/>
<rect x="799" y="562" width="800" height="1" fill="#b40000"/>
<rect x="799" y="578" width="800" height="1" fill="#b40000"/>
<rect x="799" y="596" width="800" height="1" fill="#b40000"/>
<line x1="801" y1="379.5" x2="1549" y2="379.5" stroke="#b40000" stroke-width="1" stroke-dasharray="1 3"/>
<line x1="801" y1="406.5" x2="1549" y2="406.5" stroke="#b40000" stroke-width="1" stroke-dasharray="1 3"/>
<line x1="801" y1="433.5" x2="1549" y2="433.5" stroke="#b40000" stroke-width="1" stroke-dasharray="1 3"/>
<line x1="801" y1="460.5" x2="1549" y2="460.5" stroke="#b40000" stroke-width="1" stroke-dasharray="1 3"/>
<line x1="801" y1="488.5" x2="1549" y2="488.5" stroke="#b40000" stroke-width="1" stroke-dasharray="1 3"/>
<line x1="801" y1="542.5" x2="1549" y2="542.5" stroke="#b40000" stroke-width="1" stroke-dasharray="1 3"/>
<rect x="1549" y="379" width="5" height="1" fill="#b40000"/>
<rect x="1549" y="406" width="5" height="1" fill="#b40000"/>
<rect x="1549" y="433" width="5" height="1" fill="#b40000"/>
<rect x="1549" y="460" width="5" height="1" fill="#b40000"/>
<rect x="1549" y="488" width="5" height="1" fill="#b40000"/>
<rect x="1549" y="393" width="3" height="1" fill="#b40000"/>
<rect x="1549" y="420" width="3" height="1" fill="#b40000"/>
<rect x="1549" y="447" width="3" height="1" fill="#b40000"/>
<rect x="1549" y="474" width="3" height="1" fill="#b40000"/>
<rect x="1549" y="542" width="5" height="1" fill="#b40000"/>
<rect x="1549.5" y="547.500" width="26" height="14" fill="none" stroke="#b40000"/>
<rect x="1575" y="562" width="1" height="16" fill="#b40000"/>
<rect x="880" y="563" width="1" height="15" fill="#b40000"/>
<rect x="1010" y="563" width="1" height="15" fill="#b40000"/>
<rect x="1128" y="563" width="1" height="15" fill="#b40000"/>
<rect x="1252" y="563" width="1" height="15" fill="#b40000"/>
<rect x="1348" y="563" width="1" height="15" fill="#b40000"/>
<rect x="1460" y="563" width="1" height="15" fill="#b40000"/>
<rect x="813" y="563" width="1" height="2" fill="#b40000"/>
<rect x="841" y="563" width="1" height="2" fill="#b40000"/>
<rect x="870" y="563" width="1" height="2" fill="#b40000"/>
<rect x="898" y="563" width="1" height="2" fill="#b40000"/>
<rect x="926" y="563" width="1" height="2" fill="#b40000"/>
<rect x="954" y="563" width="1" height="2" fill="#b40000"/>
<rect x="982" y="563" width="1" height="2" fill="#b40000"/>
<rect x="1011" y="563" width="1" height="2" fill="#b40000"/>
<rect x="1039" y="563" width="1" height="2" fill="#b40000"/>
<rect x="1067" y="563" width="1" height="2" fill="#b40000"/>
<rect x="1095" y="563" width="1" height="2" fill="#b40000"/>
<rect x="1123" y="563" width="1" height="2" fill="#b40000"/>
<rect x="1151" y="563" width="1" height="2" fill="#b40000"/>
<rect x="1180" y="563" width="1" height="2" fill="#b40000"/>
<rect x="1208" y="563" width="1" height="2" fill="#b40000"/>
<rect x="1236" y="563" width="1" height="2" fill="#b40000"/>
<rect x="1264" y="563" width="1" height="2" fill="#b40000"/>
<rect x="1292" y="563" width="1" height="2" fill="#b40000"/>
<rect x="1320" y="563" width="1" height="2" fill="#b40000"/>
<rect x="1349" y="563" width="1" height="2" fill="#b40000"/>
<rect x="1377" y="563" width="1" height="2" fill="#b40000"/>
<rect x="1405" y="563" width="1" height="2" fill="#b40000"/>
<rect x="1433" y="563" width="1" height="2" fill="#b40000"/>
<rect x="1461" y="563" width="1" height="2" fill="#b40000"/>
<rect x="1490" y="563" width="1" height="2" fill="#b40000"/>
<rect x="1518" y="563" width="1" height="2" fill="#b40000"/>
<rect x="801.5" y="553.5" width="2" height="9" fill="none" stroke="#ff3232"/>
<rect x="802" y="448" width="1" height="3" fill="#ff3232"/>
<rect x="802" y="468" width="1" height="1" fill="#ff3232"/>
<rect x="801.5" y="451.5" width="2" height="16" fill="#000" stroke="#ff3232"/>
<rect x="807.5" y="552.5" width="2" height="10" fill="none" stroke="#ff3232"/>
<rect x="808" y="433" width="1" height="14" fill="#ff3232"/>
<rect x="808" y="453" width="1" height="4" fill="#ff3232"/>
<rect x="807.5" y="447.5" width="2" height="5" fill="#000" stroke="#ff3232"/>
<rect x="812" y="553" width="3" height="9" fill="#54fcfc"/>
<rect x="813" y="440" width="1" height="15" fill="#54fcfc"/>
<rect x="812" y="446" width="3" height="8" fill="#54fcfc"/>
<rect x="818.5" y="556.5" width="2" height="6" fill="none" stroke="#ff3232"/>
<rect x="819" y="447" width="1" height="4" fill="#ff3232"/>
<rect x="819" y="454" width="1" height="1" fill="#ff3232"/>
<rect x="818.5" y="451.5" width="2" height="2" fill="#000" stroke="#ff3232"/>
<rect x="824.5" y="556.5" width="2" height="6" fill="none" stroke="#ff3232"/>
<rect x="825" y="450" width="1" height="1" fill="#ff3232"/>
<rect x="825" y="452" width="1" height="4" fill="#ff3232"/>
<rect x="824" y="451" width="3" height="1" fill="#ff3232"/>
<rect x="829" y="554" width="3" height="8" fill="#54fcfc"/>
<rect x="830" y="451" width="1" height="16" fill="#54fcfc"/>
<rect x="829" y="456" width="3" height="5" fill="#54fcfc"/>
<rect x="835" y="556" width="3" height="6" fill="#54fcfc"/>
<rect x="836" y="460" width="1" height="8" fill="#54fcfc"/>
<rect x="835" y="462" width="3" height="5" fill="#54fcfc"/>
<rect x="840.5" y="554.5" width="2" height="8" fill="none" stroke="#ff3232"/>
<rect x="841" y="456" width="1" height="2" fill="#ff3232"/>
<rect x="841" y="468" width="1" height="2" fill="#ff3232"/>
<rect x="840.5" y="458.5" width="2" height="9" fill="#000" stroke="#ff3232"/>
<rect x="846.5" y="556.5" width="2" height="6" fill="none" stroke="#ff3232"/>
<rect x="847" y="458" width="1" height="1" fill="#ff3232"/>
<rect x="847" y="461" width="1" height="5" fill="#ff3232"/>
<rect x="846" y="459" width="3" height="2" fill="#ff3232"/>
<rect x="852.5" y="552.5" width="2" height="10" fill="none" stroke="#ff3232"/>
<rect x="853" y="430" width="1" height="11" fill="#ff3232"/>
<rect x="853" y="457" width="1" height="1" fill="#ff3232"/>
<rect x="852.5" y="441.5" width="2" height="15" fill="#000" stroke="#ff3232"/>
<rect x="857.5" y="554.5" width="2" height="8" fill="none" stroke="#ff3232"/>
<rect x="858" y="427" width="1" height="1" fill="#ff3232"/>
<rect x="858" y="441" width="1" height="4" fill="#ff3232"/>
<rect x="857.5" y="428.5" width="2" height="12" fill="#000" stroke="#ff3232"/>
<rect x="863" y="556" width="3" height="6" fill="#54fcfc"/>
<rect x="864" y="427" width="1" height="6" fill="#54fcfc"/>
<rect x="863" y="428" width="3" height="4" fill="#54fcfc"/>
<rect x="869" y="552" width="3" height="10" fill="#54fcfc"/>
<rect x="870" y="424" width="1" height="22" fill="#54fcfc"/>
<rect x="869" y="429" width="3" height="16" fill="#54fcfc"/>
<rect x="874.5" y="554.5" width="2" height="8" fill="none" stroke="#ff3232"/>
<rect x="875" y="443" width="1" height="1" fill="#ff3232"/>
<rect x="875" y="446" width="1" height="6" fill="#ff3232"/>
<rect x="874" y="444" width="3" height="2" fill="#ff3232"/>
<rect x="880.5" y="555.5" width="2" height="7" fill="none" stroke="#ff3232"/>
<rect x="881" y="437" width="1" height="6" fill="#ff3232"/>
<rect x="881" y="445" width="1" height="3" fill="#ff3232"/>
<rect x="880" y="443" width="3" height="2" fill="#ff3232"/>
<rect x="886" y="556" width="3" height="6" fill="#54fcfc"/>
<rect x="887" y="438" width="1" height="9" fill="#54fcfc"/>
<rect x="886" y="441" width="3" height="5" fill="#54fcfc"/>
<rect x="891.5" y="555.5" width="2" height="7" fill="none" stroke="#ff3232"/>
<rect x="892" y="444" width="1" height="2" fill="#ff3232"/>
<rect x="892" y="447" width="1" height="3" fill="#ff3232"/>
<rect x="891" y="446" width="3" height="1" fill="#ff3232"/>
<rect x="897.5" y="552.5" width="2" height="10" fill="none" stroke="#ff3232"/>
<rect x="898" y="430" width="1" height="13" fill="#ff3232"/>
<rect x="898" y="449" width="1" height="3" fill="#ff3232"/>
<rect x="897.5" y="443.5" width="2" height="5" fill="#000" stroke="#ff3232"/>
<rect x="902" y="555" width="3" height="7" fill="#54fcfc"/>
<rect x="903" y="442" width="1" height="7" fill="#54fcfc"/>
<rect x="902" y="442" width="3" height="6" fill="#54fcfc"/>
<rect x="908.5" y="556.5" width="2" height="6" fill="none" stroke="#ff3232"/>
<rect x="909" y="446" width="1" height="0" fill="#ff3232"/>
<rect x="909" y="448" width="1" height="4" fill="#ff3232"/>
<rect x="908" y="446" width="3" height="2" fill="#ff3232"/>
<rect x="914" y="553" width="3" height="9" fill="#54fcfc"/>
<rect x="915" y="443" width="1" height="16" fill="#54fcfc"/>
<rect x="914" y="445" width="3" height="14" fill="#54fcfc"/>
<rect x="919.5" y="556.5" width="2" height="6" fill="none" stroke="#ff3232"/>
<rect x="920" y="456" width="1" height="4" fill="#ff3232"/>
<rect x="920" y="464" width="1" height="0" fill="#ff3232"/>
<rect x="919.5" y="460.5" width="2" height="3" fill="#000" stroke="#ff3232"/>
<rect x="925.5" y="543.5" width="2" height="19" fill="none" stroke="#ff3232"/>
<rect x="926" y="442" width="1" height="14" fill="#ff3232"/>
<rect x="926" y="461" width="1" height="0" fill="#ff3232"/>
<rect x="925.5" y="456.5" width="2" height="4" fill="#000" stroke="#ff3232"/>
<rect x="931" y="555" width="3" height="7" fill="#54fcfc"/>
<rect x="932" y="451" width="1" height="9" fill="#54fcfc"/>
<rect x="931" y="456" width="3" height="4" fill="#54fcfc"/>
<rect x="936" y="555" width="3" height="7" fill="#54fcfc"/>
<rect x="937" y="455" width="1" height="11" fill="#54fcfc"/>
<rect x="936" y="461" width="3" height="1" fill="#54fcfc"/>
<rect x="942" y="556" width="3" height="6" fill="#54fcfc"/>
<rect x="943" y="460" width="1" height="10" fill="#54fcfc"/>
<rect x="942" y="462" width="3" height="2" fill="#54fcfc"/>
<rect x="948.5" y="556.5" width="2" height="6" fill="none" stroke="#ff3232"/>
<rect x="949" y="462" width="1" height="0" fill="#ff3232"/>
<rect x="949" y="465" width="1" height="2" fill="#ff3232"/>
<rect x="948.5" y="462.5" width="2" height="2" fill="#000" stroke="#ff3232"/>
<rect x="953.5" y="554.5" width="2" height="8" fill="none" stroke="#ff3232"/>
<rect x="954" y="454" width="1" height="3" fill="#ff3232"/>
<rect x="954" y="462" width="1" height="1" fill="#ff3232"/>
<rect x="953.5" y="457.5" width="2" height="4" fill="#000" stroke="#ff3232"/>
<rect x="959.5" y="549.5" width="2" height="13" fill="none" stroke="#ff3232"/>
<rect x="960" y="456" width="1" height="5" fill="#fff"/>
<rect x="959" y="458" width="3" height="1" fill="#fff"/>
<rect x="964.5" y="550.5" width="2" height="12" fill="none" stroke="#ff3232"/>
<rect x="965" y="456" width="1" height="0" fill="#ff3232"/>
<rect x="965" y="459" width="1" height="5" fill="#ff3232"/>
<rect x="964.5" y="456.5" width="2" height="2" fill="#000" stroke="#ff3232"/>
<rect x="970.5" y="549.5" width="2" height="13" fill="none" stroke="#ff3232"/>
<rect x="971" y="440" width="1" height="6" fill="#ff3232"/>
<rect x="971" y="456" width="1" height="0" fill="#ff3232"/>
<rect x="970.5" y="446.5" width="2" height="9" fill="#000" stroke="#ff3232"/>
<rect x="976.5" y="554.5" width="2" height="8" fill="none" stroke="#ff3232"/>
<rect x="977" y="438" width="1" height="2" fill="#ff3232"/>
<rect x="977" y="451" width="1" height="1" fill="#ff3232"/>
<rect x="976.5" y="440.5" width="2" height="10" fill="#000" stroke="#ff3232"/>
<rect x="981.5" y="555.5" width="2" height="7" fill="none" stroke="#ff3232"/>
<rect x="982" y="436" width="1" height="4" fill="#ff3232"/>
<rect x="982" y="441" width="1" height="6" fill="#ff3232"/>
<rect x="981" y="440" width="3" height="1" fill="#ff3232"/>
<rect x="987.5" y="554.5" width="2" height="8" fill="none" stroke="#ff3232"/>
<rect x="988" y="417" width="1" height="7" fill="#ff3232"/>
<rect x="988" y="434" width="1" height="3" fill="#ff3232"/>
<rect x="987.5" y="424.5" width="2" height="9" fill="#000" stroke="#ff3232"/>
<rect x="993" y="555" width="3" height="7" fill="#54fcfc"/>
<rect x="994" y="422" width="1" height="14" fill="#54fcfc"/>
<rect x="993" y="428" width="3" height="4" fill="#54fcfc"/>
<rect x="998.5" y="555.5" width="2" height="7" fill="none" stroke="#ff3232"/>
<rect x="999" y="422" width="1" height="5" fill="#ff3232"/>
<rect x="999" y="434" width="1" height="1" fill="#ff3232"/>
<rect x="998.5" y="427.5" width="2" height="6" fill="#000" stroke="#ff3232"/>
<rect x="1004" y="553" width="3" height="9" fill="#54fcfc"/>
<rect x="1005" y="431" width="1" height="18" fill="#54fcfc"/>
<rect x="1004" y="433" width="3" height="15" fill="#54fcfc"/>
<rect x="1010" y="555" width="3" height="7" fill="#54fcfc"/>
<rect x="1011" y="442" width="1" height="10" fill="#54fcfc"/>
<rect x="1010" y="443" width="3" height="1" fill="#54fcfc"/>
<rect x="1015.5" y="556.5" width="2" height="6" fill="none" stroke="#ff3232"/>
<rect x="1016" y="451" width="1" height="0" fill="#ff3232"/>
<rect x="1016" y="456" width="1" height="1" fill="#ff3232"/>
<rect x="1015.5" y="451.5" width="2" height="4" fill="#000" stroke="#ff3232"/>
<rect x="1021.5" y="555.5" width="2" height="7" fill="none" stroke="#ff3232"/>
<rect x="1022" y="443" width="1" height="1" fill="#ff3232"/>
<rect x="1022" y="450" width="1" height="2" fill="#ff3232"/>
<rect x="1021.5" y="444.5" width="2" height="5" fill="#000" stroke="#ff3232"/>
<rect x="1026.5" y="555.5" width="2" height="7" fill="none" stroke="#ff3232"/>
<rect x="1027" y="438" width="1" height="3" fill="#ff3232"/>
<rect x="1027" y="443" width="1" height="3" fill="#ff3232"/>
<rect x="1026" y="441" width="3" height="2" fill="#ff3232"/>
<rect x="1032" y="555" width="3" height="7" fill="#54fcfc"/>
<rect x="1033" y="438" width="1" height="10" fill="#54fcfc"/>
<rect x="1032" y="442" width="3" height="3" fill="#54fcfc"/>
<rect x="1038" y="555" width="3" height="7" fill="#54fcfc"/>
<rect x="1039" y="444" width="1" height="7" fill="#54fcfc"/>
<rect x="1038" y="445" width="3" height="4" fill="#54fcfc"/>
<rect x="1043" y="555" width="3" height="7" fill="#54fcfc"/>
<rect x="1044" y="447" width="1" height="9" fill="#54fcfc"/>
<rect x="1043" y="451" width="3" height="3" fill="#54fcfc"/>
<rect x="1049.5" y="556.5" width="2" height="6" fill="none" stroke="#ff3232"/>
<rect x="1050" y="450" width="1" height="1" fill="#ff3232"/>
<rect x="1050" y="456" width="1" height="0" fill="#ff3232"/>
<rect x="1049.5" y="451.5" width="2" height="4" fill="#000" stroke="#ff3232"/>
<rect x="1055" y="555" width="3" height="7" fill="#54fcfc"/>
<rect x="1056" y="446" width="1" height="11" fill="#54fcfc"/>
<rect x="1055" y="448" width="3" height="7" fill="#54fcfc"/>
<rect x="1060.5" y="554.5" width="2" height="8" fill="none" stroke="#ff3232"/>
<rect x="1061" y="440" width="1" height="9" fill="#ff3232"/>
<rect x="1061" y="454" width="1" height="1" fill="#ff3232"/>
<rect x="1060.5" y="449.5" width="2" height="4" fill="#000" stroke="#ff3232"/>
<rect x="1066.5" y="541.5" width="2" height="21" fill="none" stroke="#ff3232"/>
<rect x="1067" y="428" width="1" height="1" fill="#ff3232"/>
<rect x="1067" y="452" width="1" height="8" fill="#ff3232"/>
<rect x="1066.5" y="429.5" width="2" height="22" fill="#000" stroke="#ff3232"/>
<rect x="1072.5" y="540.5" width="2" height="22" fill="none" stroke="#ff3232"/>
<rect x="1073" y="418" width="1" height="3" fill="#ff3232"/>
<rect x="1073" y="430" width="1" height="2" fill="#ff3232"/>
<rect x="1072.5" y="421.5" width="2" height="8" fill="#000" stroke="#ff3232"/>
<rect x="1077" y="553" width="3" height="9" fill="#54fcfc"/>
<rect x="1078" y="418" width="1" height="18" fill="#54fcfc"/>
<rect x="1077" y="421" width="3" height="13" fill="#54fcfc"/>
<rect x="1083.5" y="554.5" width="2" height="8" fill="none" stroke="#ff3232"/>
<rect x="1084" y="430" width="1" height="1" fill="#ff3232"/>
<rect x="1084" y="438" width="1" height="3" fill="#ff3232"/>
<rect x="1083.5" y="431.5" width="2" height="6" fill="#000" stroke="#ff3232"/>
<rect x="1088" y="556" width="3" height="6" fill="#54fcfc"/>
<rect x="1089" y="425" width="1" height="9" fill="#54fcfc"/>
<rect x="1088" y="429" width="3" height="3" fill="#54fcfc"/>
<rect x="1094.5" y="554.5" width="2" height="8" fill="none" stroke="#ff3232"/>
<rect x="1095" y="421" width="1" height="0" fill="#ff3232"/>
<rect x="1095" y="432" width="1" height="3" fill="#ff3232"/>
<rect x="1094.5" y="421.5" width="2" height="10" fill="#000" stroke="#ff3232"/>
<rect x="1100" y="554" width="3" height="8" fill="#54fcfc"/>
<rect x="1101" y="417" width="1" height="10" fill="#54fcfc"/>
<rect x="1100" y="419" width="3" height="2" fill="#54fcfc"/>
<rect x="1105" y="556" width="3" height="6" fill="#54fcfc"/>
<rect x="1106" y="417" width="1" height="8" fill="#54fcfc"/>
<rect x="1105" y="423" width="3" height="1" fill="#54fcfc"/>
<rect x="1111" y="549" width="3" height="13" fill="#54fcfc"/>
<rect x="1112" y="420" width="1" height="18" fill="#54fcfc"/>
<rect x="1111" y="420" width="3" height="18" fill="#54fcfc"/>
<rect x="1117.5" y="548.5" width="2" height="14" fill="none" stroke="#ff3232"/>
<rect x="1118" y="440" width="1" height="0" fill="#ff3232"/>
<rect x="1118" y="448" width="1" height="7" fill="#ff3232"/>
<rect x="1117.5" y="440.5" width="2" height="7" fill="#000" stroke="#ff3232"/>
<rect x="1122.5" y="546.5" width="2" height="16" fill="none" stroke="#ff3232"/>
<rect x="1123" y="414" width="1" height="17" fill="#ff3232"/>
<rect x="1123" y="439" width="1" height="1" fill="#ff3232"/>
<rect x="1122.5" y="431.5" width="2" height="7" fill="#000" stroke="#ff3232"/>
<rect x="1128" y="547" width="3" height="15" fill="#54fcfc"/>
<rect x="1129" y="427" width="1" height="22" fill="#54fcfc"/>
<rect x="1128" y="431" width="3" height="15" fill="#54fcfc"/>
<rect x="1134" y="549" width="3" height="13" fill="#54fcfc"/>
<rect x="1135" y="444" width="1" height="9" fill="#54fcfc"/>
<rect x="1134" y="446" width="3" height="2" fill="#54fcfc"/>
<rect x="1139" y="546" width="3" height="16" fill="#54fcfc"/>
<rect x="1140" y="444" width="1" height="23" fill="#54fcfc"/>
<rect x="1139" y="446" width="3" height="15" fill="#54fcfc"/>
<rect x="1145.5" y="548.5" width="2" height="14" fill="none" stroke="#ff3232"/>
<rect x="1146" y="450" width="1" height="4" fill="#ff3232"/>
<rect x="1146" y="467" width="1" height="6" fill="#ff3232"/>
<rect x="1145.5" y="454.5" width="2" height="12" fill="#000" stroke="#ff3232"/>
<rect x="1150" y="555" width="3" height="7" fill="#54fcfc"/>
<rect x="1151" y="458" width="1" height="7" fill="#54fcfc"/>
<rect x="1150" y="460" width="3" height="1" fill="#54fcfc"/>
<rect x="1156" y="555" width="3" height="7" fill="#54fcfc"/>
<rect x="1157" y="459" width="1" height="8" fill="#54fcfc"/>
<rect x="1156" y="461" width="3" height="5" fill="#54fcfc"/>
<rect x="1162.5" y="556.5" width="2" height="6" fill="none" stroke="#ff3232"/>
<rect x="1163" y="463" width="1" height="1" fill="#ff3232"/>
<rect x="1163" y="466" width="1" height="2" fill="#ff3232"/>
<rect x="1162" y="464" width="3" height="2" fill="#ff3232"/>
<rect x="1167" y="556" width="3" height="6" fill="#54fcfc"/>
<rect x="1168" y="464" width="1" height="4" fill="#54fcfc"/>
<rect x="1167" y="466" width="3" height="2" fill="#54fcfc"/>
<rect x="1173.5" y="555.5" width="2" height="7" fill="none" stroke="#ff3232"/>
<rect x="1174" y="464" width="1" height="1" fill="#ff3232"/>
<rect x="1174" y="468" width="1" height="4" fill="#ff3232"/>
<rect x="1173.5" y="465.5" width="2" height="2" fill="#000" stroke="#ff3232"/>
<rect x="1179" y="554" width="3" height="8" fill="#54fcfc"/>
<rect x="1180" y="463" width="1" height="9" fill="#54fcfc"/>
<rect x="1179" y="464" width="3" height="7" fill="#54fcfc"/>
<rect x="1184" y="556" width="3" height="6" fill="#54fcfc"/>
<rect x="1185" y="470" width="1" height="6" fill="#54fcfc"/>
<rect x="1184" y="472" width="3" height="4" fill="#54fcfc"/>
<rect x="1190" y="555" width="3" height="7" fill="#54fcfc"/>
<rect x="1191" y="473" width="1" height="7" fill="#54fcfc"/>
<rect x="1190" y="476" width="3" height="1" fill="#54fcfc"/>
<rect x="1196.5" y="556.5" width="2" height="6" fill="none" stroke="#ff3232"/>
<rect x="1197" y="471" width="1" height="1" fill="#ff3232"/>
<rect x="1197" y="478" width="1" height="0" fill="#ff3232"/>
<rect x="1196.5" y="472.5" width="2" height="5" fill="#000" stroke="#ff3232"/>
<rect x="1201" y="554" width="3" height="8" fill="#54fcfc"/>
<rect x="1202" y="472" width="1" height="11" fill="#54fcfc"/>
<rect x="1201" y="473" width="3" height="4" fill="#54fcfc"/>
<rect x="1207" y="555" width="3" height="7" fill="#54fcfc"/>
<rect x="1208" y="478" width="1" height="9" fill="#54fcfc"/>
<rect x="1207" y="479" width="3" height="5" fill="#54fcfc"/>
<rect x="1212" y="554" width="3" height="8" fill="#54fcfc"/>
<rect x="1213" y="482" width="1" height="10" fill="#54fcfc"/>
<rect x="1212" y="484" width="3" height="5" fill="#54fcfc"/>
<rect x="1218.5" y="555.5" width="2" height="7" fill="none" stroke="#ff3232"/>
<rect x="1219" y="487" width="1" height="1" fill="#ff3232"/>
<rect x="1219" y="490" width="1" height="5" fill="#ff3232"/>
<rect x="1218" y="488" width="3" height="2" fill="#ff3232"/>
<rect x="1224.5" y="556.5" width="2" height="6" fill="none" stroke="#ff3232"/>
<rect x="1225" y="487" width="1" height="1" fill="#ff3232"/>
<rect x="1225" y="489" width="1" height="3" fill="#ff3232"/>
<rect x="1224" y="488" width="3" height="1" fill="#ff3232"/>
<rect x="1229.5" y="556.5" width="2" height="6" fill="none" stroke="#ff3232"/>
<rect x="1230" y="486" width="1" height="1" fill="#ff3232"/>
<rect x="1230" y="488" width="1" height="4" fill="#ff3232"/>
<rect x="1229" y="487" width="3" height="1" fill="#ff3232"/>
<rect x="1235.5" y="554.5" width="2" height="8" fill="none" stroke="#ff3232"/>
<rect x="1236" y="480" width="1" height="2" fill="#ff3232"/>
<rect x="1236" y="491" width="1" height="0" fill="#ff3232"/>
<rect x="1235.5" y="482.5" width="2" height="8" fill="#000" stroke="#ff3232"/>
<rect x="1241.5" y="541.5" width="2" height="21" fill="none" stroke="#ff3232"/>
<rect x="1242" y="459" width="1" height="8" fill="#ff3232"/>
<rect x="1242" y="483" width="1" height="1" fill="#ff3232"/>
<rect x="1241.5" y="467.5" width="2" height="15" fill="#000" stroke="#ff3232"/>
<rect x="1246" y="551" width="3" height="11" fill="#54fcfc"/>
<rect x="1247" y="462" width="1" height="11" fill="#54fcfc"/>
<rect x="1246" y="465" width="3" height="1" fill="#54fcfc"/>
<rect x="1252" y="555" width="3" height="7" fill="#54fcfc"/>
<rect x="1253" y="466" width="1" height="12" fill="#54fcfc"/>
<rect x="1252" y="471" width="3" height="1" fill="#54fcfc"/>
<rect x="1258.5" y="555.5" width="2" height="7" fill="none" stroke="#ff3232"/>
<rect x="1259" y="457" width="1" height="9" fill="#ff3232"/>
<rect x="1259" y="471" width="1" height="0" fill="#ff3232"/>
<rect x="1258.5" y="466.5" width="2" height="4" fill="#000" stroke="#ff3232"/>
<rect x="1263.5" y="556.5" width="2" height="6" fill="none" stroke="#ff3232"/>
<rect x="1264" y="469" width="1" height="3" fill="#ff3232"/>
<rect x="1264" y="473" width="1" height="3" fill="#ff3232"/>
<rect x="1263" y="472" width="3" height="1" fill="#ff3232"/>
<rect x="1269.5" y="554.5" width="2" height="8" fill="none" stroke="#ff3232"/>
<rect x="1270" y="458" width="1" height="3" fill="#ff3232"/>
<rect x="1270" y="470" width="1" height="0" fill="#ff3232"/>
<rect x="1269.5" y="461.5" width="2" height="8" fill="#000" stroke="#ff3232"/>
<rect x="1274.5" y="555.5" width="2" height="7" fill="none" stroke="#ff3232"/>
<rect x="1275" y="451" width="1" height="0" fill="#ff3232"/>
<rect x="1275" y="463" width="1" height="0" fill="#ff3232"/>
<rect x="1274.5" y="451.5" width="2" height="11" fill="#000" stroke="#ff3232"/>
<rect x="1280.5" y="529.5" width="2" height="33" fill="none" stroke="#ff3232"/>
<rect x="1281" y="422" width="1" height="0" fill="#ff3232"/>
<rect x="1281" y="444" width="1" height="0" fill="#ff3232"/>
<rect x="1280.5" y="422.5" width="2" height="21" fill="#000" stroke="#ff3232"/>
<rect x="1286" y="543" width="3" height="19" fill="#54fcfc"/>
<rect x="1287" y="423" width="1" height="27" fill="#54fcfc"/>
<rect x="1286" y="426" width="3" height="23" fill="#54fcfc"/>
<rect x="1291" y="533" width="3" height="29" fill="#54fcfc"/>
<rect x="1292" y="415" width="1" height="17" fill="#54fcfc"/>
<rect x="1291" y="417" width="3" height="9" fill="#54fcfc"/>
<rect x="1297.5" y="535.5" width="2" height="27" fill="none" stroke="#ff3232"/>
<rect x="1298" y="404" width="1" height="2" fill="#ff3232"/>
<rect x="1298" y="428" width="1" height="3" fill="#ff3232"/>
<rect x="1297.5" y="406.5" width="2" height="21" fill="#000" stroke="#ff3232"/>
<rect x="1303.5" y="548.5" width="2" height="14" fill="none" stroke="#ff3232"/>
<rect x="1304" y="403" width="1" height="4" fill="#ff3232"/>
<rect x="1304" y="413" width="1" height="1" fill="#ff3232"/>
<rect x="1303.5" y="407.5" width="2" height="5" fill="#000" stroke="#ff3232"/>
<rect x="1308.5" y="548.5" width="2" height="14" fill="none" stroke="#ff3232"/>
<rect x="1309" y="393" width="1" height="6" fill="#ff3232"/>
<rect x="1309" y="409" width="1" height="1" fill="#ff3232"/>
<rect x="1308.5" y="399.5" width="2" height="9" fill="#000" stroke="#ff3232"/>
<rect x="1314.5" y="554.5" width="2" height="8" fill="none" stroke="#ff3232"/>
<rect x="1315" y="399" width="1" height="2" fill="#ff3232"/>
<rect x="1315" y="404" width="1" height="4" fill="#ff3232"/>
<rect x="1314.5" y="401.5" width="2" height="2" fill="#000" stroke="#ff3232"/>
<rect x="1319.5" y="547.5" width="2" height="15" fill="none" stroke="#ff3232"/>
<rect x="1320" y="387" width="1" height="2" fill="#ff3232"/>
<rect x="1320" y="400" width="1" height="8" fill="#ff3232"/>
<rect x="1319.5" y="389.5" width="2" height="10" fill="#000" stroke="#ff3232"/>
<rect x="1325.5" y="549.5" width="2" height="13" fill="none" stroke="#ff3232"/>
<rect x="1326" y="388" width="1" height="2" fill="#ff3232"/>
<rect x="1326" y="391" width="1" height="6" fill="#ff3232"/>
<rect x="1325" y="390" width="3" height="1" fill="#ff3232"/>
<rect x="1331.5" y="555.5" width="2" height="7" fill="none" stroke="#ff3232"/>
<rect x="1332" y="385" width="1" height="4" fill="#ff3232"/>
<rect x="1332" y="393" width="1" height="2" fill="#ff3232"/>
<rect x="1331.5" y="389.5" width="2" height="3" fill="#000" stroke="#ff3232"/>
<rect x="1336" y="552" width="3" height="10" fill="#54fcfc"/>
<rect x="1337" y="382" width="1" height="23" fill="#54fcfc"/>
<rect x="1336" y="389" width="3" height="12" fill="#54fcfc"/>
<rect x="1342" y="554" width="3" height="8" fill="#54fcfc"/>
<rect x="1343" y="393" width="1" height="14" fill="#54fcfc"/>
<rect x="1342" y="396" width="3" height="10" fill="#54fcfc"/>
<rect x="1348" y="552" width="3" height="10" fill="#54fcfc"/>
<rect x="1349" y="404" width="1" height="18" fill="#54fcfc"/>
<rect x="1348" y="406" width="3" height="12" fill="#54fcfc"/>
<rect x="1353.5" y="554.5" width="2" height="8" fill="none" stroke="#ff3232"/>
<rect x="1354" y="410" width="1" height="4" fill="#ff3232"/>
<rect x="1354" y="417" width="1" height="3" fill="#ff3232"/>
<rect x="1353.5" y="414.5" width="2" height="2" fill="#000" stroke="#ff3232"/>
<rect x="1359" y="555" width="3" height="7" fill="#54fcfc"/>
<rect x="1360" y="414" width="1" height="11" fill="#54fcfc"/>
<rect x="1359" y="418" width="3" height="1" fill="#54fcfc"/>
<rect x="1365.5" y="555.5" width="2" height="7" fill="none" stroke="#ff3232"/>
<rect x="1366" y="408" width="1" height="0" fill="#ff3232"/>
<rect x="1366" y="414" width="1" height="4" fill="#ff3232"/>
<rect x="1365.5" y="408.5" width="2" height="5" fill="#000" stroke="#ff3232"/>
<rect x="1370" y="556" width="3" height="6" fill="#54fcfc"/>
<rect x="1371" y="406" width="1" height="9" fill="#54fcfc"/>
<rect x="1370" y="410" width="3" height="1" fill="#54fcfc"/>
<rect x="1376.5" y="554.5" width="2" height="8" fill="none" stroke="#ff3232"/>
<rect x="1377" y="400" width="1" height="1" fill="#ff3232"/>
<rect x="1377" y="411" width="1" height="6" fill="#ff3232"/>
<rect x="1376.5" y="401.5" width="2" height="9" fill="#000" stroke="#ff3232"/>
<rect x="1381" y="554" width="3" height="8" fill="#54fcfc"/>
<rect x="1382" y="401" width="1" height="16" fill="#54fcfc"/>
<rect x="1381" y="401" width="3" height="8" fill="#54fcfc"/>
<rect x="1387.5" y="553.5" width="2" height="9" fill="none" stroke="#ff3232"/>
<rect x="1388" y="396" width="1" height="2" fill="#ff3232"/>
<rect x="1388" y="407" width="1" height="4" fill="#ff3232"/>
<rect x="1387.5" y="398.5" width="2" height="8" fill="#000" stroke="#ff3232"/>
<rect x="1393.5" y="555.5" width="2" height="7" fill="none" stroke="#ff3232"/>
<rect x="1394" y="392" width="1" height="3" fill="#ff3232"/>
<rect x="1394" y="403" width="1" height="0" fill="#ff3232"/>
<rect x="1393.5" y="395.5" width="2" height="7" fill="#000" stroke="#ff3232"/>
<rect x="1398" y="555" width="3" height="7" fill="#54fcfc"/>
<rect x="1399" y="388" width="1" height="16" fill="#54fcfc"/>
<rect x="1398" y="397" width="3" height="5" fill="#54fcfc"/>
<rect x="1404" y="553" width="3" height="9" fill="#54fcfc"/>
<rect x="1405" y="402" width="1" height="18" fill="#54fcfc"/>
<rect x="1404" y="405" width="3" height="9" fill="#54fcfc"/>
<rect x="1410" y="555" width="3" height="7" fill="#54fcfc"/>
<rect x="1411" y="412" width="1" height="11" fill="#54fcfc"/>
<rect x="1410" y="416" width="3" height="3" fill="#54fcfc"/>
<rect x="1415.5" y="552.5" width="2" height="10" fill="none" stroke="#ff3232"/>
<rect x="1416" y="398" width="1" height="5" fill="#ff3232"/>
<rect x="1416" y="419" width="1" height="0" fill="#ff3232"/>
<rect x="1415.5" y="403.5" width="2" height="15" fill="#000" stroke="#ff3232"/>
<rect x="1421.5" y="553.5" width="2" height="9" fill="none" stroke="#ff3232"/>
<rect x="1422" y="394" width="1" height="6" fill="#ff3232"/>
<rect x="1422" y="404" width="1" height="2" fill="#ff3232"/>
<rect x="1421.5" y="400.5" width="2" height="3" fill="#000" stroke="#ff3232"/>
<rect x="1427" y="553" width="3" height="9" fill="#54fcfc"/>
<rect x="1428" y="397" width="1" height="16" fill="#54fcfc"/>
<rect x="1427" y="400" width="3" height="13" fill="#54fcfc"/>
<rect x="1432" y="554" width="3" height="8" fill="#54fcfc"/>
<rect x="1433" y="405" width="1" height="15" fill="#54fcfc"/>
<rect x="1432" y="411" width="3" height="7" fill="#54fcfc"/>
<rect x="1438.5" y="552.5" width="2" height="10" fill="none" stroke="#ff3232"/>
<rect x="1439" y="399" width="1" height="8" fill="#ff3232"/>
<rect x="1439" y="420" width="1" height="0" fill="#ff3232"/>
<rect x="1438.5" y="407.5" width="2" height="12" fill="#000" stroke="#ff3232"/>
<rect x="1443" y="553" width="3" height="9" fill="#54fcfc"/>
<rect x="1444" y="400" width="1" height="18" fill="#54fcfc"/>
<rect x="1443" y="405" width="3" height="8" fill="#54fcfc"/>
<rect x="1449.5" y="554.5" width="2" height="8" fill="none" stroke="#ff3232"/>
<rect x="1450" y="399" width="1" height="8" fill="#ff3232"/>
<rect x="1450" y="415" width="1" height="4" fill="#ff3232"/>
<rect x="1449.5" y="407.5" width="2" height="7" fill="#000" stroke="#ff3232"/>
<rect x="1455" y="554" width="3" height="8" fill="#54fcfc"/>
<rect x="1456" y="406" width="1" height="10" fill="#54fcfc"/>
<rect x="1455" y="407" width="3" height="5" fill="#54fcfc"/>
<rect x="1460.5" y="554.5" width="2" height="8" fill="none" stroke="#ff3232"/>
<rect x="1461" y="406" width="1" height="4" fill="#ff3232"/>
<rect x="1461" y="412" width="1" height="6" fill="#ff3232"/>
<rect x="1460" y="410" width="3" height="2" fill="#ff3232"/>
<rect x="1466" y="553" width="3" height="9" fill="#54fcfc"/>
<rect x="1467" y="396" width="1" height="13" fill="#54fcfc"/>
<rect x="1466" y="407" width="3" height="1" fill="#54fcfc"/>
<rect x="1472" y="554" width="3" height="8" fill="#54fcfc"/>
<rect x="1473" y="407" width="1" height="13" fill="#54fcfc"/>
<rect x="1472" y="411" width="3" height="8" fill="#54fcfc"/>
<rect x="1477.5" y="555.5" width="2" height="7" fill="none" stroke="#ff3232"/>
<rect x="1478" y="412" width="1" height="2" fill="#ff3232"/>
<rect x="1478" y="420" width="1" height="1" fill="#ff3232"/>
<rect x="1477.5" y="414.5" width="2" height="5" fill="#000" stroke="#ff3232"/>
<rect x="1483.5" y="551.5" width="2" height="11" fill="none" stroke="#ff3232"/>
<rect x="1484" y="384" width="1" height="3" fill="#ff3232"/>
<rect x="1484" y="416" width="1" height="0" fill="#ff3232"/>
<rect x="1483.5" y="387.5" width="2" height="28" fill="#000" stroke="#ff3232"/>
<rect x="1489" y="553" width="3" height="9" fill="#54fcfc"/>
<rect x="1490" y="379" width="1" height="11" fill="#54fcfc"/>
<rect x="1489" y="383" width="3" height="2" fill="#54fcfc"/>
<rect x="1494" y="554" width="3" height="8" fill="#54fcfc"/>
<rect x="1495" y="385" width="1" height="14" fill="#54fcfc"/>
<rect x="1494" y="386" width="3" height="11" fill="#54fcfc"/>
<rect x="1500.5" y="556.5" width="2" height="6" fill="none" stroke="#ff3232"/>
<rect x="1501" y="396" width="1" height="1" fill="#ff3232"/>
<rect x="1501" y="404" width="1" height="0" fill="#ff3232"/>
<rect x="1500.5" y="397.5" width="2" height="6" fill="#000" stroke="#ff3232"/>
<rect x="1505.5" y="555.5" width="2" height="7" fill="none" stroke="#ff3232"/>
<rect x="1506" y="390" width="1" height="3" fill="#ff3232"/>
<rect x="1506" y="401" width="1" height="1" fill="#ff3232"/>
<rect x="1505.5" y="393.5" width="2" height="7" fill="#000" stroke="#ff3232"/>
<rect x="1511.5" y="554.5" width="2" height="8" fill="none" stroke="#ff3232"/>
<rect x="1512" y="388" width="1" height="0" fill="#ff3232"/>
<rect x="1512" y="399" width="1" height="5" fill="#ff3232"/>
<rect x="1511.5" y="388.5" width="2" height="10" fill="#000" stroke="#ff3232"/>
<rect x="1517.5" y="551.5" width="2" height="11" fill="none" stroke="#ff3232"/>
<rect x="1518" y="371" width="1" height="7" fill="#ff3232"/>
<rect x="1518" y="394" width="1" height="1" fill="#ff3232"/>
<rect x="1517.5" y="378.5" width="2" height="15" fill="#000" stroke="#ff3232"/>
<rect x="1522" y="554" width="3" height="8" fill="#54fcfc"/>
<rect x="1523" y="375" width="1" height="17" fill="#54fcfc"/>
<rect x="1522" y="381" width="3" height="8" fill="#54fcfc"/>
<rect x="1528.5" y="558.5" width="2" height="4" fill="none" stroke="#ff3232"/>
<rect x="1529" y="385" width="1" height="6" fill="#ff3232"/>
<rect x="1528" y="389" width="3" height="2" fill="#ff3232"/>
</svg>
<svg class="a" style="left:799px;top:349px" width="760" height="230" viewBox="799 349 760 230" shape-rendering="crispEdges">
<polyline points="802.5,494.8 820.0,493.1 837.5,491.0 856.2,489.0 875.0,487.2 893.8,486.0 912.5,484.4 931.2,482.8 950.0,481.0 968.8,478.8 987.5,476.9 999.9,475.9 1012.5,474.8 1031.2,472.2 1050.0,471.0 1068.8,469.8 1081.2,468.1 1093.8,466.5 1103.8,465.0 1112.5,463.8 1125.0,462.2 1137.5,461.2 1156.2,460.0 1175.0,459.4 1183.8,458.1 1190.0,458.1 1191.6,458.6 1198.6,458.6 1200.1,457.6 1208.7,457.6 1210.1,456.6 1227.4,456.6 1228.8,455.5 1282.0,455.5 1283.5,455.9 1390.0,455.6 1529.3,455.5" fill="none" stroke="#0000ff" stroke-width="1" stroke-linejoin="round"/>
<polyline points="802.5,475.2 811.2,475.2 812.5,476.5 833.8,476.5 835.0,477.5 885.0,477.5 886.2,478.5 893.8,478.5 896.2,477.5 928.8,477.5 930.0,476.5 956.2,476.5 957.5,475.2 991.2,475.2 992.5,474.4 999.9,474.4 1013.8,474.8 1035.0,474.0 1037.5,473.1 1070.0,473.1 1071.2,471.9 1092.5,471.9 1093.8,471.0 1103.8,471.0 1105.0,470.0 1120.0,470.0 1121.2,469.1 1137.5,469.1 1138.8,468.1 1187.5,467.6 1191.6,467.2 1231.7,467.2 1233.1,466.2 1253.3,466.2 1254.7,464.8 1274.8,463.4 1276.3,462.6 1290.6,461.2 1305.0,459.0 1319.4,456.9 1334.4,455.0 1363.2,450.6 1391.9,447.0 1420.7,444.1 1449.5,442.0 1478.2,439.8 1507.0,436.9 1529.3,435.2" fill="none" stroke="#c0c0c0" stroke-width="1" stroke-linejoin="round"/>
<polyline points="802.5,491.9 820.0,490.0 837.5,488.1 856.2,485.6 875.0,483.1 890.0,481.9 906.2,478.1 925.0,475.0 943.4,471.2 954.6,470.0 966.2,467.8 977.2,465.6 988.4,463.1 999.4,461.0 1011.5,459.8 1022.5,458.1 1033.4,456.9 1044.4,456.0 1056.2,455.4 1067.5,454.4 1078.5,452.5 1090.2,450.0 1101.2,448.1 1112.5,446.9 1118.5,446.5 1129.4,446.5 1135.4,445.2 1140.6,445.6 1151.5,446.2 1163.4,446.5 1180.2,446.5 1185.4,447.2 1191.6,447.3 1204.4,449.4 1218.8,451.4 1233.1,453.3 1247.5,454.4 1261.9,454.7 1276.3,454.3 1290.6,453.3 1305.0,451.4 1319.4,449.0 1320.0,449.1 1348.8,445.3 1377.5,441.2 1399.1,439.1 1420.7,438.1 1442.3,437.6 1463.8,435.5 1484.4,432.6 1501.5,428.3 1518.5,424.7 1529.3,422.5" fill="none" stroke="#00e000" stroke-width="1" stroke-linejoin="round"/>
<polyline points="802.5,474.8 811.2,474.4 816.2,472.5 825.0,470.0 836.2,468.1 842.5,466.5 853.8,462.5 865.0,458.1 876.5,454.4 887.5,451.2 898.5,449.8 904.4,449.0 909.4,448.8 915.2,448.5 921.2,449.4 934.4,449.8 936.2,450.6 968.8,450.6 971.5,451.9 983.8,451.9 988.4,451.2 994.4,450.2 999.4,449.4 1005.6,450.0 1011.5,450.2 1016.6,450.0 1022.5,449.8 1028.5,449.0 1033.4,448.1 1039.4,448.1 1044.4,447.5 1050.4,447.2 1056.2,447.2 1061.2,446.5 1067.5,445.6 1073.5,443.5 1078.5,442.5 1084.6,441.9 1090.2,440.6 1095.4,439.4 1101.2,439.0 1112.5,439.0 1118.5,439.4 1123.5,438.8 1129.4,438.5 1135.4,438.8 1140.6,439.4 1146.5,440.0 1151.5,440.6 1157.5,441.0 1163.4,441.2 1168.5,442.2 1174.4,443.1 1180.2,445.0 1185.4,447.5 1191.6,450.9 1197.2,452.6 1202.7,454.7 1208.4,457.6 1213.4,461.9 1219.5,465.5 1225.2,468.4 1230.7,471.0 1236.4,472.4 1242.5,473.4 1247.5,473.9 1253.6,474.4 1258.6,474.9 1264.5,474.9 1270.5,473.9 1275.5,472.7 1281.4,471.3 1287.5,469.8 1292.5,467.7 1298.6,464.8 1304.6,461.2 1309.3,458.6 1315.4,453.3 1320.4,449.0 1326.5,444.1 1332.5,439.1 1337.5,434.8 1343.4,431.2 1349.5,428.3 1354.5,425.4 1360.6,422.5 1365.7,419.4 1371.5,416.5 1377.5,413.2 1382.6,410.7 1388.6,407.9 1394.5,406.0 1399.5,405.0 1405.6,405.0 1411.3,404.6 1416.7,404.1 1422.4,405.0 1427.6,406.0 1433.6,406.7 1439.4,407.4 1444.4,407.9 1450.5,408.4 1456.4,408.2 1461.7,408.2 1467.4,407.9 1472.8,408.2 1478.7,408.9 1484.4,407.9 1489.4,406.7 1495.5,406.4 1501.5,406.0 1506.7,405.3 1512.8,404.1 1518.5,403.1 1523.5,402.4 1529.3,401.2" fill="none" stroke="#ff00ff" stroke-width="1" stroke-linejoin="round"/>
<polyline points="802.5,470.6 812.5,465.0 825.0,458.1 836.2,457.2 847.5,457.2 853.8,454.4 859.4,451.2 870.4,449.0 881.5,448.1 887.5,446.5 892.5,444.4 898.5,442.2 904.4,441.2 909.4,441.5 915.2,445.6 921.2,448.1 926.2,450.0 932.2,450.6 937.2,453.1 943.4,455.0 949.4,456.9 954.6,457.9 960.0,458.5 966.2,459.4 971.5,458.1 977.2,456.9 983.5,455.6 988.4,451.9 994.4,447.5 999.4,445.6 1005.6,443.1 1011.5,442.5 1016.6,441.9 1022.5,440.2 1028.5,440.2 1036.2,440.2 1044.4,444.0 1050.4,446.9 1056.2,449.0 1061.2,449.4 1065.0,448.8 1067.5,446.9 1073.5,444.4 1078.5,443.1 1084.6,441.9 1090.2,440.6 1095.4,438.1 1101.2,435.0 1106.2,432.8 1112.5,430.6 1118.5,429.8 1123.5,429.4 1129.4,431.2 1135.4,433.1 1140.6,436.2 1146.5,439.8 1151.5,442.5 1157.5,447.5 1163.4,451.9 1168.5,455.0 1174.4,457.5 1180.2,460.6 1185.4,463.8 1191.6,467.0 1197.2,467.7 1202.7,469.8 1208.4,472.7 1213.4,474.9 1219.5,477.7 1225.2,480.2 1230.7,481.6 1236.4,482.1 1242.5,481.0 1247.5,480.2 1253.6,479.2 1258.6,478.5 1264.5,477.0 1270.5,474.1 1275.5,469.8 1281.4,463.4 1287.5,459.8 1292.5,454.7 1298.6,446.8 1304.6,440.4 1309.3,436.0 1315.4,429.6 1320.4,422.1 1326.5,413.9 1332.5,408.2 1337.5,406.0 1343.4,402.1 1349.5,401.7 1354.5,402.7 1360.6,403.6 1365.7,404.6 1371.5,405.6 1377.5,406.7 1382.6,407.4 1388.6,408.2 1394.5,408.2 1399.5,407.9 1405.6,407.4 1411.3,407.0 1416.7,407.0 1422.4,406.7 1427.6,407.0 1433.6,407.0 1439.4,407.4 1444.4,408.9 1450.5,409.9 1456.4,410.3 1461.7,410.3 1467.4,409.9 1472.8,411.3 1478.7,412.5 1484.4,409.6 1489.4,406.7 1495.5,405.3 1501.5,403.6 1506.7,401.7 1512.8,399.5 1518.5,397.4 1523.5,394.9 1529.3,392.0" fill="none" stroke="#ffff00" stroke-width="1" stroke-linejoin="round"/>
<polyline points="802.5,461.2 808.8,458.8 816.2,456.9 825.0,451.9 830.6,453.1 836.2,457.5 842.5,456.9 847.5,459.4 853.8,456.9 859.4,450.0 864.4,443.8 870.4,441.9 876.5,438.8 881.5,439.0 887.5,442.8 892.5,445.4 898.5,444.4 904.4,444.4 909.4,446.0 915.2,446.9 921.2,450.0 926.2,452.5 932.2,456.9 937.2,459.4 943.4,461.2 949.4,461.5 954.6,461.5 960.0,461.2 966.2,459.4 971.5,455.0 977.2,450.6 983.5,447.5 988.4,441.9 994.4,437.5 999.4,433.1 1005.6,436.2 1011.5,437.5 1016.6,441.9 1022.5,443.8 1028.5,446.5 1033.4,446.5 1039.4,446.9 1044.4,447.2 1050.4,447.8 1056.2,450.6 1061.2,452.5 1065.0,450.0 1067.5,448.1 1073.5,441.2 1078.5,438.8 1084.6,433.1 1090.2,430.0 1095.4,428.5 1101.2,428.5 1106.2,426.2 1112.5,427.5 1118.5,429.0 1123.5,431.2 1129.4,435.6 1135.4,441.9 1140.6,446.2 1146.5,450.0 1151.5,455.0 1157.5,458.5 1163.4,461.0 1168.5,461.9 1174.4,464.4 1180.2,466.9 1185.4,469.4 1191.6,471.3 1197.2,472.0 1202.7,474.9 1208.4,477.7 1213.4,480.6 1219.5,484.2 1225.2,487.1 1230.7,487.5 1236.4,487.5 1239.6,484.2 1242.5,482.8 1247.5,478.2 1253.6,474.1 1258.6,469.5 1264.5,467.2 1270.5,466.2 1275.5,463.4 1281.4,455.5 1287.5,451.4 1292.5,443.2 1298.6,431.0 1304.6,422.1 1309.3,418.8 1315.4,408.7 1320.4,401.5 1326.5,397.4 1332.5,394.5 1337.5,395.5 1343.4,395.9 1349.5,401.0 1354.5,406.7 1360.6,412.5 1365.7,413.6 1371.5,414.2 1377.5,411.3 1382.6,408.9 1388.6,406.0 1394.5,403.1 1399.5,402.7 1405.6,404.6 1411.3,407.0 1416.7,407.0 1422.4,408.2 1427.6,410.3 1433.6,410.7 1439.4,408.2 1444.4,409.9 1450.5,411.3 1456.4,411.0 1461.7,411.0 1467.4,409.6 1472.8,410.7 1478.7,411.3 1484.4,408.2 1489.4,402.7 1495.5,400.7 1501.5,397.4 1506.7,393.0 1512.8,392.0 1518.5,390.9 1523.5,389.7 1529.3,387.3" fill="none" stroke="#ffffff" stroke-width="1" stroke-linejoin="round"/>
<polyline points="802.0,553.0 807.6,552.9 813.3,553.1 818.9,553.9 824.6,554.2 830.2,554.2 835.8,554.5 841.5,554.4 847.1,554.6 852.7,554.4 858.4,554.5 864.0,554.8 869.6,554.7 875.3,554.6 880.9,554.5 886.5,554.7 892.2,554.6 897.8,554.4 903.5,554.4 909.1,554.7 914.7,554.6 920.4,554.6 926.0,553.7 931.6,553.8 937.3,553.8 942.9,553.8 948.5,553.9 954.2,554.1 959.8,553.6 965.4,553.0 971.1,552.7 976.7,552.5 982.4,553.6 988.0,553.4 993.6,553.4 999.3,553.3 1004.9,553.0 1010.5,553.0 1016.2,553.7 1021.8,554.1 1027.4,554.7 1033.1,554.8 1038.7,554.9 1044.3,555.0 1050.0,555.1 1055.6,555.1 1061.3,555.1 1066.9,553.8 1072.5,552.4 1078.2,552.2 1083.8,552.1 1089.4,552.1 1095.1,552.0 1100.7,552.0 1106.3,552.0 1112.0,551.5 1117.6,550.9 1123.2,551.4 1128.9,552.0 1134.5,551.6 1140.2,550.9 1145.8,550.2 1151.4,550.3 1157.1,550.4 1162.7,550.4 1168.3,551.0 1174.0,551.6 1179.6,552.4 1185.2,553.2 1190.9,553.8 1196.5,554.7 1202.1,555.3 1207.8,555.2 1213.4,555.1 1219.1,555.0 1224.7,555.0 1230.3,555.2 1236.0,555.2 1241.6,553.8 1247.2,553.4 1252.9,553.3 1258.5,553.3 1264.1,553.5 1269.8,553.5 1275.4,553.5 1281.0,551.0 1286.7,549.8 1292.3,547.9 1298.0,547.3 1303.6,547.0 1309.2,546.4 1314.9,546.4 1320.5,545.5 1326.1,545.1 1331.8,545.1 1337.4,547.2 1343.0,548.2 1348.7,550.0 1354.3,551.8 1359.9,552.4 1365.6,553.1 1371.2,553.2 1376.9,553.9 1382.5,554.3 1388.1,554.1 1393.8,554.4 1399.4,554.4 1405.0,554.5 1410.7,554.6 1416.3,554.3 1421.9,554.1 1427.6,553.9 1433.2,553.9 1438.8,553.8 1444.5,553.7 1450.1,553.6 1455.8,553.5 1461.4,553.6 1467.0,553.4 1472.7,553.5 1478.3,553.7 1483.9,553.5 1489.6,553.4 1495.2,553.6 1500.8,553.9 1506.5,554.1 1512.1,554.1 1517.7,553.8 1523.4,553.8 1529.0,554.2" fill="none" stroke="#ffff00" stroke-width="1.6" stroke-linejoin="round"/>
<polyline points="802.0,553.0 807.6,552.9 813.3,553.1 818.9,553.9 824.6,554.2 830.2,554.4 835.8,555.1 841.5,555.2 847.1,555.2 852.7,554.5 858.4,554.5 864.0,554.6 869.6,554.3 875.3,553.9 880.9,554.5 886.5,554.9 892.2,554.7 897.8,554.6 903.5,554.8 909.1,554.9 914.7,554.3 920.4,554.5 926.0,552.8 931.6,552.8 937.3,552.7 942.9,553.3 948.5,553.3 954.2,555.4 959.8,554.3 965.4,553.3 971.1,552.1 976.7,551.7 982.4,551.7 988.0,552.5 993.6,553.5 999.3,554.5 1004.9,554.3 1010.5,554.4 1016.2,554.8 1021.8,554.8 1027.4,554.9 1033.1,555.4 1038.7,555.4 1044.3,555.1 1050.0,555.3 1055.6,555.2 1061.3,554.9 1066.9,552.3 1072.5,549.6 1078.2,549.1 1083.8,549.0 1089.4,549.4 1095.1,551.7 1100.7,554.4 1106.3,554.8 1112.0,554.0 1117.6,552.5 1123.2,551.0 1128.9,549.7 1134.5,548.4 1140.2,547.9 1145.8,547.9 1151.4,549.6 1157.1,551.0 1162.7,552.3 1168.3,554.1 1174.0,555.4 1179.6,555.2 1185.2,555.3 1190.9,555.2 1196.5,555.3 1202.1,555.2 1207.8,555.3 1213.4,554.9 1219.1,554.8 1224.7,554.8 1230.3,555.1 1236.0,555.0 1241.6,552.7 1247.2,552.0 1252.9,551.7 1258.5,551.5 1264.1,551.9 1269.8,554.3 1275.4,555.0 1281.0,550.2 1286.7,548.1 1292.3,543.8 1298.0,540.3 1303.6,539.1 1309.2,542.5 1314.9,544.6 1320.5,547.2 1326.1,549.8 1331.8,551.1 1337.4,551.9 1343.0,551.8 1348.7,552.8 1354.3,553.7 1359.9,553.8 1365.6,554.4 1371.2,554.6 1376.9,554.9 1382.5,554.8 1388.1,554.5 1393.8,554.4 1399.4,554.2 1405.0,554.1 1410.7,554.4 1416.3,554.1 1421.9,553.9 1427.6,553.6 1433.2,553.7 1438.8,553.2 1444.5,553.2 1450.1,553.3 1455.8,553.4 1461.4,553.4 1467.0,553.7 1472.7,553.8 1478.3,554.1 1483.9,553.6 1489.6,553.4 1495.2,553.5 1500.8,553.9 1506.5,554.0 1512.1,554.5 1517.7,554.2 1523.4,554.2 1529.0,554.5" fill="none" stroke="#ffffff" stroke-width="1.6" stroke-linejoin="round"/>
<path d="M1219.500 495.500 H1230 M1219.500 495.500 l3 -2.500 M1219.500 495.500 l3 2.500" stroke="#c0c0c0" stroke-width="1" fill="none"/>
<path d="M1497 374.500 L1517 371.500 M1517 371.500 l-4 -1.500 M1517 371.500 l-3 3" stroke="#c0c0c0" stroke-width="1" fill="none"/>
</svg>
<div class="a" style="left:803px;top:352px;font-size:12px;line-height:16px;color:#d0d0d0;font-weight:400">中国人寿(日线)</div>
<svg class="a" style="left:888px;top:352px" width="14" height="14" viewBox="0 0 14 14"><circle cx="7" cy="7" r="6" fill="#606060"/><path d="M4 5.500 L7 8.500 L10 5.500" stroke="#d0d0d0" stroke-width="1.500" fill="none"/></svg>
<div class="a ax" style="left:905px;top:352px;color:#fff;">MA5: 45.35</div>
<div class="a ax" style="left:970px;top:352px;color:#ffff00;">MA10: 45.04</div>
<div class="a ax" style="left:1042px;top:352px;color:#ff00ff;">MA20: 44.35</div>
<div class="a ax" style="left:1114px;top:352px;color:#00e000;">MA60: 42.80</div>
<div class="a ax" style="left:1186px;top:352px;color:#c0c0c0;">MA120: 41.88</div>
<div class="a ax" style="left:1265px;top:352px;color:#0000ff;">MA250: 40.43</div>
<div class="a ax" style="left:1564px;top:373px;color:#ff3c3c;">46.00</div>
<div class="a ax" style="left:1564px;top:400px;color:#ff3c3c;">44.00</div>
<div class="a ax" style="left:1564px;top:427px;color:#ff3c3c;">42.00</div>
<div class="a ax" style="left:1564px;top:454px;color:#ff3c3c;">40.00</div>
<div class="a ax" style="left:1564px;top:482px;color:#ff3c3c;">38.00</div>
<div class="a ax" style="left:1561px;top:536px;color:#ff3c3c;">35000</div>
<div class="a ax" style="left:1553px;top:548px;color:#ff3c3c;">X10</div>
<div class="a ax" style="left:1557px;top:562px;color:#d0d0d0;font-size:14px">+</div>
<div class="a ax" style="left:1583px;top:562px;color:#d0d0d0;font-size:14px">−</div>
<div class="a ax" style="left:1464px;top:369px;color:#c0c0c0;">46.63</div>
<div class="a ax" style="left:1232px;top:490px;color:#c0c0c0;">37.50</div>
<svg class="a" style="left:801px;top:511px" width="14" height="14" viewBox="0 0 14 14"><circle cx="7" cy="7" r="6" fill="#606060"/><path d="M4 5.500 L7 8.500 L10 5.500" stroke="#d0d0d0" stroke-width="1.500" fill="none"/></svg>
<div class="a ax" style="left:818px;top:511px;color:#c0c0c0;">VOL-TDX(5,10)</div>
<div class="a ax" style="left:904px;top:511px;color:#c0c0c0;">VOLUME: 4671</div>
<div class="a ax" style="left:993px;top:511px;color:#c0c0c0;">MA5: 130195</div>
<div class="a ax" style="left:1069px;top:511px;color:#ffff00;">MA10: 130686</div>
<div class="a ax" style="left:803px;top:564px;color:#ff3c3c;font-family:'Liberation Sans','Noto Sans CJK SC',sans-serif">2025年</div>
<div class="a ax" style="left:882px;top:564px;color:#ff3c3c;">7</div>
<div class="a ax" style="left:1012px;top:564px;color:#ff3c3c;">8</div>
<div class="a ax" style="left:1130px;top:564px;color:#ff3c3c;">9</div>
<div class="a ax" style="left:1254px;top:564px;color:#ff3c3c;">10</div>
<div class="a ax" style="left:1350px;top:564px;color:#ff3c3c;">11</div>
<div class="a ax" style="left:1462px;top:564px;color:#ff3c3c;">12</div>

</body></html>
